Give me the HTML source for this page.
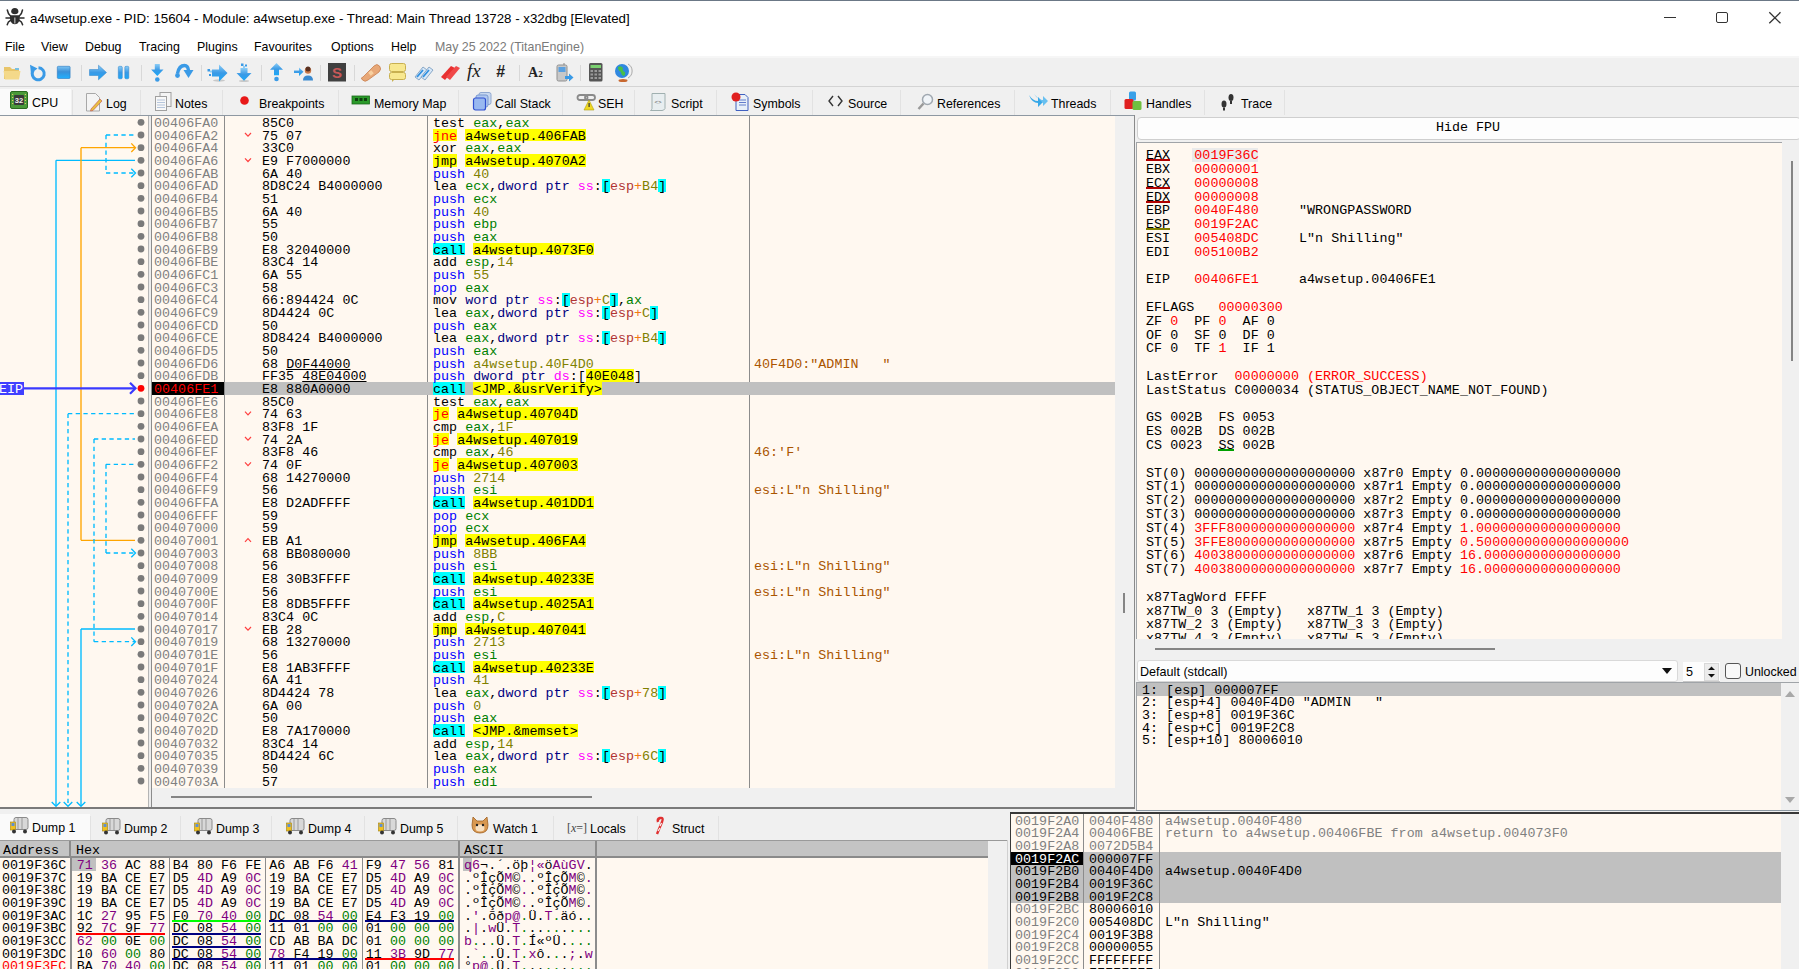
<!DOCTYPE html><html><head><meta charset="utf-8"><style>html,body{margin:0;padding:0;}body{width:1799px;height:969px;overflow:hidden;position:relative;background:#f0f0f0;font-family:"Liberation Sans",sans-serif;}.m{font-family:"Liberation Mono",monospace;font-size:13.3333px;line-height:13px;position:absolute;white-space:pre;letter-spacing:0.04px;}.s{font-family:"Liberation Sans",sans-serif;position:absolute;white-space:pre;}svg{position:absolute;overflow:visible}</style></head><body><div style="position:absolute;left:0px;top:0px;width:1799px;height:57px;background:#ffffff"></div><div style="position:absolute;left:0px;top:56px;width:1799px;height:2px;background:#f6f6f6"></div><div style="position:absolute;left:0px;top:0px;width:1799px;height:1px;background:#6b7886"></div><svg style="left:0px;top:0px" width="30" height="30" viewBox="0 0 30 30"><path d="M11.2 11.5 Q11.2 8 14.8 8 Q18.4 8 18.4 11.5 Q18.4 14.2 14.8 14.2 Q11.2 14.2 11.2 11.5z" fill="#2e2e2e"/><path d="M10 15.3 L19.8 15.3 Q20.3 21 17.5 23.5 Q14.8 25 12.2 23.5 Q9.4 21 10 15.3z" fill="#2e2e2e"/><path d="M10.5 16 Q8 14 7.3 10 M19.3 16 Q21.8 14 22.5 10 M6 18 H10 M20 18 H24 M10.5 20.5 Q8 21.5 7.2 24.8 M19.3 20.5 Q21.8 21.5 22.6 24.8" stroke="#2e2e2e" stroke-width="1.5" fill="none" stroke-linecap="round"/><path d="M14.8 17.5 V23.5" stroke="#a8a8a8" stroke-width="1.4"/></svg><div style="position:absolute;left:30px;top:11px;white-space:pre;font-family:'Liberation Sans', sans-serif;font-size:13.3px;line-height:16px;color:#000">a4wsetup.exe - PID: 15604 - Module: a4wsetup.exe - Thread: Main Thread 13728 - x32dbg [Elevated]</div><div style="position:absolute;left:1664px;top:17px;width:12px;height:1.4px;background:#333"></div><div style="position:absolute;left:1716px;top:11.5px;width:11.7px;height:11.3px;border:1.5px solid #333;border-radius:2px;box-sizing:border-box"></div><svg style="left:1769px;top:11.5px" width="12" height="12" viewBox="0 0 12 12"><path d="M0.3 0.3 L11.5 11.3 M11.5 0.3 L0.3 11.3" stroke="#333" stroke-width="1.3"/></svg><div style="position:absolute;left:5px;top:40px;white-space:pre;font-family:'Liberation Sans', sans-serif;font-size:12.4px;line-height:14px;color:#000">File</div><div style="position:absolute;left:41px;top:40px;white-space:pre;font-family:'Liberation Sans', sans-serif;font-size:12.4px;line-height:14px;color:#000">View</div><div style="position:absolute;left:85px;top:40px;white-space:pre;font-family:'Liberation Sans', sans-serif;font-size:12.4px;line-height:14px;color:#000">Debug</div><div style="position:absolute;left:139px;top:40px;white-space:pre;font-family:'Liberation Sans', sans-serif;font-size:12.4px;line-height:14px;color:#000">Tracing</div><div style="position:absolute;left:197px;top:40px;white-space:pre;font-family:'Liberation Sans', sans-serif;font-size:12.4px;line-height:14px;color:#000">Plugins</div><div style="position:absolute;left:254px;top:40px;white-space:pre;font-family:'Liberation Sans', sans-serif;font-size:12.4px;line-height:14px;color:#000">Favourites</div><div style="position:absolute;left:331px;top:40px;white-space:pre;font-family:'Liberation Sans', sans-serif;font-size:12.4px;line-height:14px;color:#000">Options</div><div style="position:absolute;left:391px;top:40px;white-space:pre;font-family:'Liberation Sans', sans-serif;font-size:12.4px;line-height:14px;color:#000">Help</div><div style="position:absolute;left:435px;top:40px;white-space:pre;font-family:'Liberation Sans', sans-serif;font-size:12.4px;line-height:14px;color:#7a7a7a">May 25 2022 (TitanEngine)</div><div style="position:absolute;left:0px;top:58px;width:1799px;height:28px;background:#f0f0f0"></div><div style="position:absolute;left:0px;top:86px;width:1799px;height:1px;background:#d4d4d4"></div><div style="position:absolute;left:81px;top:65px;width:1px;height:16px;background:#d8d8d8"></div><div style="position:absolute;left:141px;top:65px;width:1px;height:16px;background:#d8d8d8"></div><div style="position:absolute;left:201px;top:65px;width:1px;height:16px;background:#d8d8d8"></div><div style="position:absolute;left:261px;top:65px;width:1px;height:16px;background:#d8d8d8"></div><div style="position:absolute;left:320px;top:65px;width:1px;height:16px;background:#d8d8d8"></div><div style="position:absolute;left:354px;top:65px;width:1px;height:16px;background:#d8d8d8"></div><div style="position:absolute;left:519px;top:65px;width:1px;height:16px;background:#d8d8d8"></div><div style="position:absolute;left:580px;top:65px;width:1px;height:16px;background:#d8d8d8"></div><svg style="left:3px;top:65px" width="18" height="15" viewBox="0 0 18 15"><path d="M1 2 h6 l2 2 h7 v10 h-15z" fill="#e8c56a"/><path d="M0.5 6 h17 l-1.5 8.5 h-14z" fill="#f4d98a"/><path d="M12 3 h4 v2 h-4z" fill="#7ac0e0"/></svg><svg style="left:29px;top:64px" width="18" height="18" viewBox="0 0 18 18"><path d="M4.2 6.5 A6 6 0 1 0 9.5 3.8" stroke="#3a9ae6" stroke-width="3" fill="none"/><path d="M1 0.8 L8.5 4.5 L2 9.5z" fill="#3a9ae6"/><circle cx="10" cy="10.5" r="1.8" fill="#f0f0f0"/></svg><svg style="left:57px;top:65.5px" width="14" height="13"><defs><linearGradient id="gst" x1="0" y1="0" x2="0" y2="1"><stop offset="0" stop-color="#7cc4f4"/><stop offset="0.45" stop-color="#3a90d8"/><stop offset="1" stop-color="#20b0ff"/></linearGradient></defs><rect x="0.3" y="0.3" width="12.8" height="12.2" rx="1" fill="url(#gst)" stroke="#2a78c0" stroke-width="0.6"/></svg><svg style="left:0px;top:0px;width:0;height:0" width="0" height="0"><defs><linearGradient id="gb" x1="0" y1="0" x2="0" y2="1"><stop offset="0" stop-color="#8ccdf6"/><stop offset="0.5" stop-color="#3a9ae6"/><stop offset="1" stop-color="#1aa8f8"/></linearGradient></defs></svg><svg style="left:89px;top:65px" width="18" height="15" viewBox="0 0 18 15"><path d="M0.5 4.5 h9 v-4.3 l8 7.3 l-8 7.3 v-4.3 h-9z" fill="url(#gb)" stroke="#2a80c8" stroke-width="0.5"/></svg><svg style="left:118px;top:65.5px" width="12" height="14"><rect x="0.3" y="0.3" width="4" height="12.5" rx="1.2" fill="url(#gb)" stroke="#2a80c8" stroke-width="0.5"/><rect x="6.8" y="0.3" width="4" height="12.5" rx="1.2" fill="url(#gb)" stroke="#2a80c8" stroke-width="0.5"/></svg><svg style="left:151px;top:63.5px" width="13" height="19" viewBox="0 0 13 19"><path d="M3.8 0 h5 v5.5 h3.7 l-6.2 6.5 l-6.2 -6.5 h3.7z" fill="url(#gb)"/><circle cx="6.3" cy="15.5" r="2.3" fill="#3a9ae6"/></svg><svg style="left:174px;top:64px" width="20" height="16" viewBox="0 0 20 16"><path d="M3.5 9.5 Q5 1.5 10.5 1.5 Q14 1.5 14.5 6.5" stroke="#3a9ae6" stroke-width="3.4" fill="none"/><path d="M9.5 6 h10 l-5 8z" fill="#3a9ae6"/><circle cx="3.5" cy="11.5" r="2.4" fill="#3a9ae6"/></svg><svg style="left:207px;top:64px" width="21" height="18" viewBox="0 0 21 18"><ellipse cx="12" cy="16.5" rx="6" ry="1.2" fill="#c8c8c8"/><path d="M5 5.5 h7 v-5 l8.5 8.5 l-8.5 8.5 v-5 h-7z" fill="url(#gb)"/><rect x="0.5" y="5" width="2.5" height="2.5" fill="#3a9ae6"/><rect x="2" y="10" width="2" height="2" fill="#3a9ae6"/><rect x="3" y="6.5" width="2" height="2" fill="#8ccdf6"/></svg><svg style="left:236px;top:63px" width="16" height="19" viewBox="0 0 16 19"><ellipse cx="8" cy="18" rx="5" ry="1" fill="#c8c8c8"/><path d="M4.5 5 h7 v5 h4 l-7.5 7.8 l-7.5 -7.8 h4z" fill="url(#gb)"/><rect x="5" y="0.5" width="2.5" height="2.5" fill="#3a9ae6"/><rect x="9" y="1.5" width="2" height="2" fill="#3a9ae6"/><rect x="7" y="3" width="2" height="2" fill="#8ccdf6"/></svg><svg style="left:270px;top:63px" width="14" height="19" viewBox="0 0 14 19"><path d="M6.5 0 l6.5 6.8 h-4 v5.5 h-5 v-5.5 h-4z" fill="url(#gb)"/><circle cx="6.5" cy="16" r="2.3" fill="#3a9ae6"/></svg><svg style="left:294px;top:65px" width="20" height="16" viewBox="0 0 20 16"><path d="M0 5.5 h5 v-3 l4.5 4.3 l-4.5 4.3 v-3 h-5z" fill="url(#gb)"/><path d="M9 15.5 q0 -5 5 -5 q5 0 5 5z" fill="#3a8ad0"/><circle cx="14" cy="5.5" r="3.2" fill="#c87848"/><circle cx="14" cy="4" r="2.5" fill="#5a3020"/></svg><svg style="left:328px;top:63px" width="18" height="19"><rect x="0" y="0" width="18" height="18.5" fill="#404040"/><text x="9" y="14.5" font-family="Liberation Sans" font-size="15" font-weight="bold" fill="#c85858" text-anchor="middle">S</text></svg><svg style="left:361px;top:64px" width="20" height="18" viewBox="0 0 20 18"><path d="M2 13 L13 2 Q16 -1 18.5 2 Q21 5 18 8 L7 16 Q4 18.5 1.5 16 Q-1 13.5 2 13z" fill="#e8a878" stroke="#c88050" stroke-width="0.8"/><rect x="8" y="7" width="4" height="4" fill="#f8d0a0" transform="rotate(-40 10 9)"/></svg><svg style="left:389px;top:63px" width="17" height="19" viewBox="0 0 17 19"><rect x="0.5" y="0.5" width="16" height="8" rx="2" fill="#f8e890" stroke="#c8b050"/><rect x="0.5" y="9.5" width="16" height="7" rx="2" fill="#f8e890" stroke="#c8b050"/><path d="M3 16 l0 3 l3 -3z" fill="#c8b050"/></svg><svg style="left:414px;top:64px" width="20" height="18" viewBox="0 0 20 18"><path d="M1 13 L9 3 L13 6 L5 16z" fill="#d8e8f8" stroke="#88a8c8"/><path d="M7 13 L15 3 L19 6 L11 16z" fill="#d8e8f8" stroke="#88a8c8"/><path d="M3 13 L9 6 M9 13 L15 6" stroke="#3090e0" stroke-width="1.8"/></svg><svg style="left:441px;top:64px" width="20" height="18" viewBox="0 0 20 18"><path d="M0 13 L10 2 L14 4 L4 16z" fill="#e83030"/><path d="M5 13 L15 2 L19 4 L9 16z" fill="#f04848"/></svg><div class="s" style="left:467px;top:61px;font-family:'Liberation Serif',serif;font-style:italic;font-size:19px;line-height:20px;color:#222">fx</div><div class="s" style="left:496px;top:63px;font-family:'Liberation Sans',sans-serif;font-weight:bold;font-style:italic;font-size:16px;line-height:18px;color:#222">#</div><div class="s" style="left:528px;top:65px;font-family:'Liberation Serif',serif;font-weight:bold;font-size:14px;line-height:16px;color:#222">A<span style="font-size:9px">2</span></div><svg style="left:556px;top:63px" width="18" height="19" viewBox="0 0 18 19"><rect x="1" y="2" width="10" height="16" rx="1.5" fill="#c8c8c8" stroke="#909090"/><rect x="2.5" y="4" width="7" height="5" fill="#5aa0e0"/><path d="M8 2 V0" stroke="#888"/><path d="M9 13 h4 v-2.5 l4.5 4 l-4.5 4 v-2.5 h-4z" fill="#3a9ae6"/></svg><svg style="left:589px;top:63px" width="14" height="19" viewBox="0 0 14 19"><rect x="0" y="0" width="13.5" height="18.5" rx="1.5" fill="#555"/><rect x="1.5" y="2" width="10.5" height="3" fill="#7ad070"/><g fill="#9a9a9a"><rect x="1.5" y="7" width="2.5" height="2"/><rect x="5.5" y="7" width="2.5" height="2"/><rect x="9.5" y="7" width="2.5" height="2"/><rect x="1.5" y="10.5" width="2.5" height="2"/><rect x="5.5" y="10.5" width="2.5" height="2"/><rect x="9.5" y="10.5" width="2.5" height="2"/><rect x="1.5" y="14" width="2.5" height="2"/><rect x="5.5" y="14" width="2.5" height="2"/><rect x="9.5" y="14" width="2.5" height="2"/></g></svg><svg style="left:614px;top:63px" width="19" height="19" viewBox="0 0 19 19"><circle cx="8" cy="8" r="7" fill="#2f88e0"/><path d="M4 4 q3 -2 5 1 q-1 3 2 4 q1 2 -1 4 q-3 -1 -3 -4 q-3 -1 -3 -5z" fill="#48c048"/><path d="M14 1 a8 8 0 0 1 0 14" stroke="#aaa" fill="none"/><ellipse cx="9" cy="17.5" rx="4.5" ry="1.5" fill="#c86830"/></svg><div style="position:absolute;left:0px;top:87px;width:1799px;height:29px;background:#f0f0f0"></div><div style="position:absolute;left:0px;top:89px;width:71px;height:27px;background:#fafafa"></div><div style="position:absolute;left:32px;top:96px;white-space:pre;font-family:'Liberation Sans', sans-serif;font-size:12.4px;line-height:14px;color:#000">CPU</div><div style="position:absolute;left:72px;top:90px;width:67px;height:25px;background:#f0f0f0;border-left:1px solid #e2e2e2;box-sizing:border-box"></div><div style="position:absolute;left:106px;top:97px;white-space:pre;font-family:'Liberation Sans', sans-serif;font-size:12.4px;line-height:14px;color:#000">Log</div><div style="position:absolute;left:140px;top:90px;width:82px;height:25px;background:#f0f0f0;border-left:1px solid #e2e2e2;box-sizing:border-box"></div><div style="position:absolute;left:175px;top:97px;white-space:pre;font-family:'Liberation Sans', sans-serif;font-size:12.4px;line-height:14px;color:#000">Notes</div><div style="position:absolute;left:222px;top:90px;width:115px;height:25px;background:#f0f0f0;border-left:1px solid #e2e2e2;box-sizing:border-box"></div><div style="position:absolute;left:259px;top:97px;white-space:pre;font-family:'Liberation Sans', sans-serif;font-size:12.4px;line-height:14px;color:#000">Breakpoints</div><div style="position:absolute;left:338px;top:90px;width:120px;height:25px;background:#f0f0f0;border-left:1px solid #e2e2e2;box-sizing:border-box"></div><div style="position:absolute;left:374px;top:97px;white-space:pre;font-family:'Liberation Sans', sans-serif;font-size:12.4px;line-height:14px;color:#000">Memory Map</div><div style="position:absolute;left:458px;top:90px;width:104px;height:25px;background:#f0f0f0;border-left:1px solid #e2e2e2;box-sizing:border-box"></div><div style="position:absolute;left:495px;top:97px;white-space:pre;font-family:'Liberation Sans', sans-serif;font-size:12.4px;line-height:14px;color:#000">Call Stack</div><div style="position:absolute;left:562px;top:90px;width:72px;height:25px;background:#f0f0f0;border-left:1px solid #e2e2e2;box-sizing:border-box"></div><div style="position:absolute;left:598px;top:97px;white-space:pre;font-family:'Liberation Sans', sans-serif;font-size:12.4px;line-height:14px;color:#000">SEH</div><div style="position:absolute;left:634px;top:90px;width:82px;height:25px;background:#f0f0f0;border-left:1px solid #e2e2e2;box-sizing:border-box"></div><div style="position:absolute;left:671px;top:97px;white-space:pre;font-family:'Liberation Sans', sans-serif;font-size:12.4px;line-height:14px;color:#000">Script</div><div style="position:absolute;left:716px;top:90px;width:96px;height:25px;background:#f0f0f0;border-left:1px solid #e2e2e2;box-sizing:border-box"></div><div style="position:absolute;left:753px;top:97px;white-space:pre;font-family:'Liberation Sans', sans-serif;font-size:12.4px;line-height:14px;color:#000">Symbols</div><div style="position:absolute;left:812px;top:90px;width:88px;height:25px;background:#f0f0f0;border-left:1px solid #e2e2e2;box-sizing:border-box"></div><div style="position:absolute;left:848px;top:97px;white-space:pre;font-family:'Liberation Sans', sans-serif;font-size:12.4px;line-height:14px;color:#000">Source</div><div style="position:absolute;left:900px;top:90px;width:114px;height:25px;background:#f0f0f0;border-left:1px solid #e2e2e2;box-sizing:border-box"></div><div style="position:absolute;left:937px;top:97px;white-space:pre;font-family:'Liberation Sans', sans-serif;font-size:12.4px;line-height:14px;color:#000">References</div><div style="position:absolute;left:1014px;top:90px;width:96px;height:25px;background:#f0f0f0;border-left:1px solid #e2e2e2;box-sizing:border-box"></div><div style="position:absolute;left:1051px;top:97px;white-space:pre;font-family:'Liberation Sans', sans-serif;font-size:12.4px;line-height:14px;color:#000">Threads</div><div style="position:absolute;left:1110px;top:90px;width:94px;height:25px;background:#f0f0f0;border-left:1px solid #e2e2e2;box-sizing:border-box"></div><div style="position:absolute;left:1146px;top:97px;white-space:pre;font-family:'Liberation Sans', sans-serif;font-size:12.4px;line-height:14px;color:#000">Handles</div><div style="position:absolute;left:1204px;top:90px;width:80px;height:25px;background:#f0f0f0;border-left:1px solid #e2e2e2;box-sizing:border-box"></div><div style="position:absolute;left:1241px;top:97px;white-space:pre;font-family:'Liberation Sans', sans-serif;font-size:12.4px;line-height:14px;color:#000">Trace</div><div style="position:absolute;left:1284px;top:90px;width:1px;height:25px;background:#e2e2e2"></div><svg style="left:10px;top:91px" width="18" height="18" viewBox="0 0 18 18"><rect x="0.5" y="0.5" width="17" height="17" rx="1.5" fill="#4a9a3a" stroke="#2a6a20"/><g fill="#d8c860"><rect x="2" y="3" width="1.2" height="1"/><rect x="2" y="6" width="1.2" height="1"/><rect x="2" y="9" width="1.2" height="1"/><rect x="2" y="12" width="1.2" height="1"/><rect x="14.8" y="3" width="1.2" height="1"/><rect x="14.8" y="6" width="1.2" height="1"/><rect x="14.8" y="9" width="1.2" height="1"/><rect x="14.8" y="12" width="1.2" height="1"/></g><rect x="4" y="4" width="10" height="10" rx="1" fill="#3a3a3a"/><text x="9" y="12" font-family="Liberation Sans" font-size="7.5" font-weight="bold" fill="#f0f0f0" text-anchor="middle">32</text></svg><svg style="left:86px;top:93px" width="17" height="19" viewBox="0 0 17 19"><path d="M0.5 0.5 h9 l4 4 v13.5 h-13z" fill="#f4f4f4" stroke="#a8a8a8"/><path d="M5 16 L14 6 L16 8 L7 17.5 L4.5 18z" fill="#e8c040" stroke="#c05050" stroke-width="0.6"/></svg><svg style="left:155px;top:92px" width="17" height="19" viewBox="0 0 17 19"><rect x="5" y="0.5" width="11" height="14" fill="#f4f4f4" stroke="#a0a0a0"/><rect x="0.5" y="4.5" width="11" height="14" fill="#f8f8f8" stroke="#a0a0a0"/><path d="M2 8 h8 M2 10.5 h8 M2 13 h8 M2 15.5 h8" stroke="#9ab0d0" stroke-width="0.7"/></svg><svg style="left:240px;top:96px" width="10" height="10"><circle cx="4.5" cy="4.5" r="4.3" fill="#e81818"/></svg><svg style="left:352px;top:96px" width="18" height="10"><rect x="0" y="0" width="17.5" height="8" fill="#2a9a2a" stroke="#1a6a1a" stroke-width="0.8"/><rect x="3" y="2" width="3" height="3" fill="#104010"/><rect x="7.5" y="2" width="3" height="3" fill="#104010"/><rect x="12" y="2" width="3" height="3" fill="#104010"/></svg><svg style="left:473px;top:92px" width="19" height="19" viewBox="0 0 19 19"><rect x="6" y="0.5" width="12" height="12" rx="2" fill="#c8d8f0" stroke="#90a8d0"/><rect x="3" y="3" width="12" height="12" rx="2" fill="#b0c8f0" stroke="#7898d0"/><rect x="0.5" y="6" width="12" height="12" rx="2" fill="#98b8f0" stroke="#3050d0" stroke-width="1.2"/></svg><svg style="left:577px;top:94px" width="19" height="17" viewBox="0 0 19 17"><rect x="0.5" y="1" width="10" height="5" rx="2.5" fill="none" stroke="#8a8a8a" stroke-width="1.8"/><rect x="8" y="1" width="10" height="5" rx="2.5" fill="none" stroke="#8a8a8a" stroke-width="1.8"/><path d="M12 6 L17 16 H7z" fill="#f0d820" stroke="#b0a010" stroke-width="0.6"/><rect x="11.5" y="9" width="1.2" height="4" fill="#333"/></svg><svg style="left:650px;top:93px" width="16" height="18" viewBox="0 0 16 18"><path d="M2 0.5 h13 v15 q-1 2 -3 2 h-11.5 q1.5 -1 1.5 -2z" fill="#e8eef0" stroke="#a0b0b0"/><text x="8" y="11" font-family="Liberation Mono" font-size="6" fill="#555" text-anchor="middle">&lt;&gt;</text></svg><svg style="left:731px;top:92px" width="18" height="19" viewBox="0 0 18 19"><path d="M5 2.5 h9 l3 3 v13 h-12z" fill="#e8f0f8" stroke="#4060c0"/><path d="M8 8 h7 M8 10.5 h7 M8 13 h7" stroke="#4060c0" stroke-width="0.8"/><circle cx="5" cy="5" r="4.5" fill="#e02020"/></svg><svg style="left:828px;top:95px" width="15" height="12" viewBox="0 0 15 12"><path d="M5 1 L1 6 L5 11 M10 1 L14 6 L10 11" stroke="#333" stroke-width="1.4" fill="none"/></svg><svg style="left:917px;top:93px" width="17" height="18" viewBox="0 0 17 18"><circle cx="10.5" cy="6.5" r="5" fill="#f0f4f8" stroke="#a0a8b0" stroke-width="1.5"/><path d="M6.5 10.5 L1.5 16" stroke="#9a9a9a" stroke-width="2.5"/></svg><svg style="left:1029px;top:93px" width="19" height="17" viewBox="0 0 19 17"><path d="M0 2 q4 6 9 6 v-4 l5 5 l-5 5 v-4 q-6 0 -9 -8z" fill="#38a8e8"/><path d="M5 1 q4 6 9 6 v-4 l5 5 l-5 5 v-3" fill="#68c0f0"/></svg><svg style="left:1124px;top:91px" width="18" height="20" viewBox="0 0 18 20"><rect x="5" y="0.5" width="7" height="9" rx="1.5" fill="#38a0e8"/><rect x="0.5" y="8" width="9" height="10" rx="1.5" fill="#e02020"/><rect x="8.5" y="10" width="9" height="9" rx="1.5" fill="#70c040"/></svg><svg style="left:1220px;top:92px" width="15" height="19" viewBox="0 0 15 19"><ellipse cx="4" cy="12" rx="2.5" ry="3.5" fill="#333"/><ellipse cx="11" cy="5.5" rx="2.5" ry="3.5" fill="#333"/><rect x="3" y="15.5" width="2" height="3" fill="#333"/><rect x="10" y="9" width="2" height="3" fill="#333"/></svg><div style="position:absolute;left:0px;top:115px;width:1135px;height:1px;background:#8e98a2"></div><div style="position:absolute;left:0px;top:116px;width:148px;height:691.5px;background:#fff8f0"></div><div style="position:absolute;left:148px;top:116px;width:1px;height:691px;background:#b4b4b4"></div><div style="position:absolute;left:149px;top:116px;width:2px;height:691px;background:#ececec"></div><div style="position:absolute;left:151px;top:116px;width:1px;height:691px;background:#8c8c8c"></div><div style="position:absolute;left:152px;top:116px;width:963px;height:672px;background:#fff8f0"></div><div style="position:absolute;left:1115px;top:116px;width:19px;height:691px;background:#f0f0f0"></div><div style="position:absolute;left:152px;top:788px;width:963px;height:19px;background:#f0f0f0"></div><div style="position:absolute;left:171px;top:796px;width:421px;height:2px;background:#858585"></div><div style="position:absolute;left:1123px;top:593px;width:2px;height:20px;background:#858585"></div><div style="position:absolute;left:1134px;top:115px;width:1px;height:694px;background:#8a8a8a"></div><div style="position:absolute;left:0px;top:807px;width:1135px;height:2.5px;background:#7a7a7a"></div><div style="position:absolute;left:224px;top:116px;width:1px;height:672px;background:#8c8c8c"></div><div style="position:absolute;left:427px;top:116px;width:1px;height:672px;background:#8c8c8c"></div><div style="position:absolute;left:749px;top:116px;width:1px;height:672px;background:#8c8c8c"></div><div style="position:absolute;left:225px;top:382.007px;width:890px;height:12.667px;background:#c0c0c0"></div><div style="position:absolute;left:152px;top:382.007px;width:72px;height:12.667px;background:#000000"></div><div style="position:absolute;left:433.0px;top:128.67px;width:24.12px;height:12.667px;background:#ffff00"></div><div style="position:absolute;left:465.16px;top:128.67px;width:120.6px;height:12.667px;background:#ffff00"></div><div style="position:absolute;left:433.0px;top:154.0px;width:24.12px;height:12.667px;background:#ffff00"></div><div style="position:absolute;left:465.16px;top:154.0px;width:120.6px;height:12.667px;background:#ffff00"></div><div style="position:absolute;left:601.84px;top:179.34px;width:8.04px;height:12.667px;background:#00ffff"></div><div style="position:absolute;left:658.12px;top:179.34px;width:8.04px;height:12.667px;background:#00ffff"></div><div style="position:absolute;left:433.0px;top:242.67px;width:32.16px;height:12.667px;background:#00ffff"></div><div style="position:absolute;left:473.2px;top:242.67px;width:120.6px;height:12.667px;background:#ffff00"></div><div style="position:absolute;left:561.64px;top:293.34px;width:8.04px;height:12.667px;background:#00ffff"></div><div style="position:absolute;left:609.88px;top:293.34px;width:8.04px;height:12.667px;background:#00ffff"></div><div style="position:absolute;left:601.84px;top:306.0px;width:8.04px;height:12.667px;background:#00ffff"></div><div style="position:absolute;left:650.08px;top:306.0px;width:8.04px;height:12.667px;background:#00ffff"></div><div style="position:absolute;left:601.84px;top:331.34px;width:8.04px;height:12.667px;background:#00ffff"></div><div style="position:absolute;left:658.12px;top:331.34px;width:8.04px;height:12.667px;background:#00ffff"></div><div style="position:absolute;left:585.76px;top:369.34px;width:48.24px;height:12.667px;background:#ffff00"></div><div style="position:absolute;left:433.0px;top:382.01px;width:32.16px;height:12.667px;background:#00ffff"></div><div style="position:absolute;left:473.2px;top:382.01px;width:128.64px;height:12.667px;background:#ffff00"></div><div style="position:absolute;left:433.0px;top:407.34px;width:16.08px;height:12.667px;background:#ffff00"></div><div style="position:absolute;left:457.12px;top:407.34px;width:120.6px;height:12.667px;background:#ffff00"></div><div style="position:absolute;left:433.0px;top:432.68px;width:16.08px;height:12.667px;background:#ffff00"></div><div style="position:absolute;left:457.12px;top:432.68px;width:120.6px;height:12.667px;background:#ffff00"></div><div style="position:absolute;left:433.0px;top:458.01px;width:16.08px;height:12.667px;background:#ffff00"></div><div style="position:absolute;left:457.12px;top:458.01px;width:120.6px;height:12.667px;background:#ffff00"></div><div style="position:absolute;left:433.0px;top:496.01px;width:32.16px;height:12.667px;background:#00ffff"></div><div style="position:absolute;left:473.2px;top:496.01px;width:120.6px;height:12.667px;background:#ffff00"></div><div style="position:absolute;left:433.0px;top:534.01px;width:24.12px;height:12.667px;background:#ffff00"></div><div style="position:absolute;left:465.16px;top:534.01px;width:120.6px;height:12.667px;background:#ffff00"></div><div style="position:absolute;left:433.0px;top:572.01px;width:32.16px;height:12.667px;background:#00ffff"></div><div style="position:absolute;left:473.2px;top:572.01px;width:120.6px;height:12.667px;background:#ffff00"></div><div style="position:absolute;left:433.0px;top:597.35px;width:32.16px;height:12.667px;background:#00ffff"></div><div style="position:absolute;left:473.2px;top:597.35px;width:120.6px;height:12.667px;background:#ffff00"></div><div style="position:absolute;left:433.0px;top:622.68px;width:24.12px;height:12.667px;background:#ffff00"></div><div style="position:absolute;left:465.16px;top:622.68px;width:120.6px;height:12.667px;background:#ffff00"></div><div style="position:absolute;left:433.0px;top:660.68px;width:32.16px;height:12.667px;background:#00ffff"></div><div style="position:absolute;left:473.2px;top:660.68px;width:120.6px;height:12.667px;background:#ffff00"></div><div style="position:absolute;left:601.84px;top:686.01px;width:8.04px;height:12.667px;background:#00ffff"></div><div style="position:absolute;left:658.12px;top:686.01px;width:8.04px;height:12.667px;background:#00ffff"></div><div style="position:absolute;left:433.0px;top:724.02px;width:32.16px;height:12.667px;background:#00ffff"></div><div style="position:absolute;left:473.2px;top:724.02px;width:104.52px;height:12.667px;background:#ffff00"></div><div style="position:absolute;left:601.84px;top:749.35px;width:8.04px;height:12.667px;background:#00ffff"></div><div style="position:absolute;left:658.12px;top:749.35px;width:8.04px;height:12.667px;background:#00ffff"></div><div class="m" style="left:154px;top:118.0px;line-height:12.667px;color:#808080">00406FA0</div><div class="m" style="left:262px;top:118.0px;line-height:12.667px;color:#000">85C0</div><div class="m" style="left:433px;top:118.0px;line-height:12.667px"><span style="color:#000000">test</span><span style="color:#000000"> </span><span style="color:#008000">eax</span><span style="color:#000000">,</span><span style="color:#008000">eax</span></div><div class="m" style="left:154px;top:130.67px;line-height:12.667px;color:#808080">00406FA2</div><div class="m" style="left:262px;top:130.67px;line-height:12.667px;color:#000">75 07</div><div class="m" style="left:433px;top:130.67px;line-height:12.667px"><span style="color:#ff0000">jne</span><span style="color:#000000"> </span><span style="color:#000000">a4wsetup.406FAB</span></div><div class="m" style="left:154px;top:143.33px;line-height:12.667px;color:#808080">00406FA4</div><div class="m" style="left:262px;top:143.33px;line-height:12.667px;color:#000">33C0</div><div class="m" style="left:433px;top:143.33px;line-height:12.667px"><span style="color:#000000">xor</span><span style="color:#000000"> </span><span style="color:#008000">eax</span><span style="color:#000000">,</span><span style="color:#008000">eax</span></div><div class="m" style="left:154px;top:156.0px;line-height:12.667px;color:#808080">00406FA6</div><div class="m" style="left:262px;top:156.0px;line-height:12.667px;color:#000">E9 F7000000</div><div class="m" style="left:433px;top:156.0px;line-height:12.667px"><span style="color:#000000">jmp</span><span style="color:#000000"> </span><span style="color:#000000">a4wsetup.4070A2</span></div><div class="m" style="left:154px;top:168.67px;line-height:12.667px;color:#808080">00406FAB</div><div class="m" style="left:262px;top:168.67px;line-height:12.667px;color:#000">6A 40</div><div class="m" style="left:433px;top:168.67px;line-height:12.667px"><span style="color:#0000ff">push</span><span style="color:#000000"> </span><span style="color:#808000">40</span></div><div class="m" style="left:154px;top:181.34px;line-height:12.667px;color:#808080">00406FAD</div><div class="m" style="left:262px;top:181.34px;line-height:12.667px;color:#000">8D8C24 B4000000</div><div class="m" style="left:433px;top:181.34px;line-height:12.667px"><span style="color:#000000">lea</span><span style="color:#000000"> </span><span style="color:#008000">ecx</span><span style="color:#000000">,</span><span style="color:#000080">dword</span><span style="color:#000000"> </span><span style="color:#000080">ptr</span><span style="color:#000000"> </span><span style="color:#ff00ff">ss</span><span style="color:#000000">:</span><span style="color:#000000">[</span><span style="color:#b03434">esp</span><span style="color:#f27711">+</span><span style="color:#808000">B4</span><span style="color:#000000">]</span></div><div class="m" style="left:154px;top:194.0px;line-height:12.667px;color:#808080">00406FB4</div><div class="m" style="left:262px;top:194.0px;line-height:12.667px;color:#000">51</div><div class="m" style="left:433px;top:194.0px;line-height:12.667px"><span style="color:#0000ff">push</span><span style="color:#000000"> </span><span style="color:#008000">ecx</span></div><div class="m" style="left:154px;top:206.67px;line-height:12.667px;color:#808080">00406FB5</div><div class="m" style="left:262px;top:206.67px;line-height:12.667px;color:#000">6A 40</div><div class="m" style="left:433px;top:206.67px;line-height:12.667px"><span style="color:#0000ff">push</span><span style="color:#000000"> </span><span style="color:#808000">40</span></div><div class="m" style="left:154px;top:219.34px;line-height:12.667px;color:#808080">00406FB7</div><div class="m" style="left:262px;top:219.34px;line-height:12.667px;color:#000">55</div><div class="m" style="left:433px;top:219.34px;line-height:12.667px"><span style="color:#0000ff">push</span><span style="color:#000000"> </span><span style="color:#008000">ebp</span></div><div class="m" style="left:154px;top:232.0px;line-height:12.667px;color:#808080">00406FB8</div><div class="m" style="left:262px;top:232.0px;line-height:12.667px;color:#000">50</div><div class="m" style="left:433px;top:232.0px;line-height:12.667px"><span style="color:#0000ff">push</span><span style="color:#000000"> </span><span style="color:#008000">eax</span></div><div class="m" style="left:154px;top:244.67px;line-height:12.667px;color:#808080">00406FB9</div><div class="m" style="left:262px;top:244.67px;line-height:12.667px;color:#000">E8 32040000</div><div class="m" style="left:433px;top:244.67px;line-height:12.667px"><span style="color:#000000">call</span><span style="color:#000000"> </span><span style="color:#000000">a4wsetup.4073F0</span></div><div class="m" style="left:154px;top:257.34px;line-height:12.667px;color:#808080">00406FBE</div><div class="m" style="left:262px;top:257.34px;line-height:12.667px;color:#000">83C4 14</div><div class="m" style="left:433px;top:257.34px;line-height:12.667px"><span style="color:#000000">add</span><span style="color:#000000"> </span><span style="color:#008000">esp</span><span style="color:#000000">,</span><span style="color:#808000">14</span></div><div class="m" style="left:154px;top:270.0px;line-height:12.667px;color:#808080">00406FC1</div><div class="m" style="left:262px;top:270.0px;line-height:12.667px;color:#000">6A 55</div><div class="m" style="left:433px;top:270.0px;line-height:12.667px"><span style="color:#0000ff">push</span><span style="color:#000000"> </span><span style="color:#808000">55</span></div><div class="m" style="left:154px;top:282.67px;line-height:12.667px;color:#808080">00406FC3</div><div class="m" style="left:262px;top:282.67px;line-height:12.667px;color:#000">58</div><div class="m" style="left:433px;top:282.67px;line-height:12.667px"><span style="color:#0000ff">pop</span><span style="color:#000000"> </span><span style="color:#008000">eax</span></div><div class="m" style="left:154px;top:295.34px;line-height:12.667px;color:#808080">00406FC4</div><div class="m" style="left:262px;top:295.34px;line-height:12.667px;color:#000">66:894424 0C</div><div class="m" style="left:433px;top:295.34px;line-height:12.667px"><span style="color:#000000">mov</span><span style="color:#000000"> </span><span style="color:#000080">word</span><span style="color:#000000"> </span><span style="color:#000080">ptr</span><span style="color:#000000"> </span><span style="color:#ff00ff">ss</span><span style="color:#000000">:</span><span style="color:#000000">[</span><span style="color:#b03434">esp</span><span style="color:#f27711">+</span><span style="color:#808000">C</span><span style="color:#000000">]</span><span style="color:#000000">,</span><span style="color:#008000">ax</span></div><div class="m" style="left:154px;top:308.0px;line-height:12.667px;color:#808080">00406FC9</div><div class="m" style="left:262px;top:308.0px;line-height:12.667px;color:#000">8D4424 0C</div><div class="m" style="left:433px;top:308.0px;line-height:12.667px"><span style="color:#000000">lea</span><span style="color:#000000"> </span><span style="color:#008000">eax</span><span style="color:#000000">,</span><span style="color:#000080">dword</span><span style="color:#000000"> </span><span style="color:#000080">ptr</span><span style="color:#000000"> </span><span style="color:#ff00ff">ss</span><span style="color:#000000">:</span><span style="color:#000000">[</span><span style="color:#b03434">esp</span><span style="color:#f27711">+</span><span style="color:#808000">C</span><span style="color:#000000">]</span></div><div class="m" style="left:154px;top:320.67px;line-height:12.667px;color:#808080">00406FCD</div><div class="m" style="left:262px;top:320.67px;line-height:12.667px;color:#000">50</div><div class="m" style="left:433px;top:320.67px;line-height:12.667px"><span style="color:#0000ff">push</span><span style="color:#000000"> </span><span style="color:#008000">eax</span></div><div class="m" style="left:154px;top:333.34px;line-height:12.667px;color:#808080">00406FCE</div><div class="m" style="left:262px;top:333.34px;line-height:12.667px;color:#000">8D8424 B4000000</div><div class="m" style="left:433px;top:333.34px;line-height:12.667px"><span style="color:#000000">lea</span><span style="color:#000000"> </span><span style="color:#008000">eax</span><span style="color:#000000">,</span><span style="color:#000080">dword</span><span style="color:#000000"> </span><span style="color:#000080">ptr</span><span style="color:#000000"> </span><span style="color:#ff00ff">ss</span><span style="color:#000000">:</span><span style="color:#000000">[</span><span style="color:#b03434">esp</span><span style="color:#f27711">+</span><span style="color:#808000">B4</span><span style="color:#000000">]</span></div><div class="m" style="left:154px;top:346.01px;line-height:12.667px;color:#808080">00406FD5</div><div class="m" style="left:262px;top:346.01px;line-height:12.667px;color:#000">50</div><div class="m" style="left:433px;top:346.01px;line-height:12.667px"><span style="color:#0000ff">push</span><span style="color:#000000"> </span><span style="color:#008000">eax</span></div><div class="m" style="left:154px;top:358.67px;line-height:12.667px;color:#808080">00406FD6</div><div class="m" style="left:262px;top:358.67px;line-height:12.667px;color:#000">68 <span style="text-decoration:underline">D0F44000</span></div><div class="m" style="left:433px;top:358.67px;line-height:12.667px"><span style="color:#0000ff">push</span><span style="color:#000000"> </span><span style="color:#808000">a4wsetup.40F4D0</span></div><div class="m" style="left:754px;top:358.67px;line-height:12.667px;color:#aa5500">40F4D0:"ADMIN   "</div><div class="m" style="left:154px;top:371.34px;line-height:12.667px;color:#808080">00406FDB</div><div class="m" style="left:262px;top:371.34px;line-height:12.667px;color:#000">FF35 <span style="text-decoration:underline">48E04000</span></div><div class="m" style="left:433px;top:371.34px;line-height:12.667px"><span style="color:#0000ff">push</span><span style="color:#000000"> </span><span style="color:#000080">dword</span><span style="color:#000000"> </span><span style="color:#000080">ptr</span><span style="color:#000000"> </span><span style="color:#ff00ff">ds</span><span style="color:#000000">:</span><span style="color:#000000">[</span><span style="color:#000000">40E048</span><span style="color:#000000">]</span></div><div class="m" style="left:154px;top:384.01px;line-height:12.667px;color:#ff0000">00406FE1</div><div class="m" style="left:262px;top:384.01px;line-height:12.667px;color:#000">E8 880A0000</div><div class="m" style="left:433px;top:384.01px;line-height:12.667px"><span style="color:#000000">call</span><span style="color:#000000"> </span><span style="color:#000000">&lt;JMP.&amp;usrVerify&gt;</span></div><div class="m" style="left:154px;top:396.67px;line-height:12.667px;color:#808080">00406FE6</div><div class="m" style="left:262px;top:396.67px;line-height:12.667px;color:#000">85C0</div><div class="m" style="left:433px;top:396.67px;line-height:12.667px"><span style="color:#000000">test</span><span style="color:#000000"> </span><span style="color:#008000">eax</span><span style="color:#000000">,</span><span style="color:#008000">eax</span></div><div class="m" style="left:154px;top:409.34px;line-height:12.667px;color:#808080">00406FE8</div><div class="m" style="left:262px;top:409.34px;line-height:12.667px;color:#000">74 63</div><div class="m" style="left:433px;top:409.34px;line-height:12.667px"><span style="color:#ff0000">je</span><span style="color:#000000"> </span><span style="color:#000000">a4wsetup.40704D</span></div><div class="m" style="left:154px;top:422.01px;line-height:12.667px;color:#808080">00406FEA</div><div class="m" style="left:262px;top:422.01px;line-height:12.667px;color:#000">83F8 1F</div><div class="m" style="left:433px;top:422.01px;line-height:12.667px"><span style="color:#000000">cmp</span><span style="color:#000000"> </span><span style="color:#008000">eax</span><span style="color:#000000">,</span><span style="color:#808000">1F</span></div><div class="m" style="left:154px;top:434.68px;line-height:12.667px;color:#808080">00406FED</div><div class="m" style="left:262px;top:434.68px;line-height:12.667px;color:#000">74 2A</div><div class="m" style="left:433px;top:434.68px;line-height:12.667px"><span style="color:#ff0000">je</span><span style="color:#000000"> </span><span style="color:#000000">a4wsetup.407019</span></div><div class="m" style="left:154px;top:447.34px;line-height:12.667px;color:#808080">00406FEF</div><div class="m" style="left:262px;top:447.34px;line-height:12.667px;color:#000">83F8 46</div><div class="m" style="left:433px;top:447.34px;line-height:12.667px"><span style="color:#000000">cmp</span><span style="color:#000000"> </span><span style="color:#008000">eax</span><span style="color:#000000">,</span><span style="color:#808000">46</span></div><div class="m" style="left:754px;top:447.34px;line-height:12.667px;color:#aa5500">46:'F'</div><div class="m" style="left:154px;top:460.01px;line-height:12.667px;color:#808080">00406FF2</div><div class="m" style="left:262px;top:460.01px;line-height:12.667px;color:#000">74 0F</div><div class="m" style="left:433px;top:460.01px;line-height:12.667px"><span style="color:#ff0000">je</span><span style="color:#000000"> </span><span style="color:#000000">a4wsetup.407003</span></div><div class="m" style="left:154px;top:472.68px;line-height:12.667px;color:#808080">00406FF4</div><div class="m" style="left:262px;top:472.68px;line-height:12.667px;color:#000">68 14270000</div><div class="m" style="left:433px;top:472.68px;line-height:12.667px"><span style="color:#0000ff">push</span><span style="color:#000000"> </span><span style="color:#808000">2714</span></div><div class="m" style="left:154px;top:485.34px;line-height:12.667px;color:#808080">00406FF9</div><div class="m" style="left:262px;top:485.34px;line-height:12.667px;color:#000">56</div><div class="m" style="left:433px;top:485.34px;line-height:12.667px"><span style="color:#0000ff">push</span><span style="color:#000000"> </span><span style="color:#008000">esi</span></div><div class="m" style="left:754px;top:485.34px;line-height:12.667px;color:#aa5500">esi:L"n Shilling"</div><div class="m" style="left:154px;top:498.01px;line-height:12.667px;color:#808080">00406FFA</div><div class="m" style="left:262px;top:498.01px;line-height:12.667px;color:#000">E8 D2ADFFFF</div><div class="m" style="left:433px;top:498.01px;line-height:12.667px"><span style="color:#000000">call</span><span style="color:#000000"> </span><span style="color:#000000">a4wsetup.401DD1</span></div><div class="m" style="left:154px;top:510.68px;line-height:12.667px;color:#808080">00406FFF</div><div class="m" style="left:262px;top:510.68px;line-height:12.667px;color:#000">59</div><div class="m" style="left:433px;top:510.68px;line-height:12.667px"><span style="color:#0000ff">pop</span><span style="color:#000000"> </span><span style="color:#008000">ecx</span></div><div class="m" style="left:154px;top:523.34px;line-height:12.667px;color:#808080">00407000</div><div class="m" style="left:262px;top:523.34px;line-height:12.667px;color:#000">59</div><div class="m" style="left:433px;top:523.34px;line-height:12.667px"><span style="color:#0000ff">pop</span><span style="color:#000000"> </span><span style="color:#008000">ecx</span></div><div class="m" style="left:154px;top:536.01px;line-height:12.667px;color:#808080">00407001</div><div class="m" style="left:262px;top:536.01px;line-height:12.667px;color:#000">EB A1</div><div class="m" style="left:433px;top:536.01px;line-height:12.667px"><span style="color:#000000">jmp</span><span style="color:#000000"> </span><span style="color:#000000">a4wsetup.406FA4</span></div><div class="m" style="left:154px;top:548.68px;line-height:12.667px;color:#808080">00407003</div><div class="m" style="left:262px;top:548.68px;line-height:12.667px;color:#000">68 BB080000</div><div class="m" style="left:433px;top:548.68px;line-height:12.667px"><span style="color:#0000ff">push</span><span style="color:#000000"> </span><span style="color:#808000">8BB</span></div><div class="m" style="left:154px;top:561.35px;line-height:12.667px;color:#808080">00407008</div><div class="m" style="left:262px;top:561.35px;line-height:12.667px;color:#000">56</div><div class="m" style="left:433px;top:561.35px;line-height:12.667px"><span style="color:#0000ff">push</span><span style="color:#000000"> </span><span style="color:#008000">esi</span></div><div class="m" style="left:754px;top:561.35px;line-height:12.667px;color:#aa5500">esi:L"n Shilling"</div><div class="m" style="left:154px;top:574.01px;line-height:12.667px;color:#808080">00407009</div><div class="m" style="left:262px;top:574.01px;line-height:12.667px;color:#000">E8 30B3FFFF</div><div class="m" style="left:433px;top:574.01px;line-height:12.667px"><span style="color:#000000">call</span><span style="color:#000000"> </span><span style="color:#000000">a4wsetup.40233E</span></div><div class="m" style="left:154px;top:586.68px;line-height:12.667px;color:#808080">0040700E</div><div class="m" style="left:262px;top:586.68px;line-height:12.667px;color:#000">56</div><div class="m" style="left:433px;top:586.68px;line-height:12.667px"><span style="color:#0000ff">push</span><span style="color:#000000"> </span><span style="color:#008000">esi</span></div><div class="m" style="left:754px;top:586.68px;line-height:12.667px;color:#aa5500">esi:L"n Shilling"</div><div class="m" style="left:154px;top:599.35px;line-height:12.667px;color:#808080">0040700F</div><div class="m" style="left:262px;top:599.35px;line-height:12.667px;color:#000">E8 8DB5FFFF</div><div class="m" style="left:433px;top:599.35px;line-height:12.667px"><span style="color:#000000">call</span><span style="color:#000000"> </span><span style="color:#000000">a4wsetup.4025A1</span></div><div class="m" style="left:154px;top:612.01px;line-height:12.667px;color:#808080">00407014</div><div class="m" style="left:262px;top:612.01px;line-height:12.667px;color:#000">83C4 0C</div><div class="m" style="left:433px;top:612.01px;line-height:12.667px"><span style="color:#000000">add</span><span style="color:#000000"> </span><span style="color:#008000">esp</span><span style="color:#000000">,</span><span style="color:#808000">C</span></div><div class="m" style="left:154px;top:624.68px;line-height:12.667px;color:#808080">00407017</div><div class="m" style="left:262px;top:624.68px;line-height:12.667px;color:#000">EB 28</div><div class="m" style="left:433px;top:624.68px;line-height:12.667px"><span style="color:#000000">jmp</span><span style="color:#000000"> </span><span style="color:#000000">a4wsetup.407041</span></div><div class="m" style="left:154px;top:637.35px;line-height:12.667px;color:#808080">00407019</div><div class="m" style="left:262px;top:637.35px;line-height:12.667px;color:#000">68 13270000</div><div class="m" style="left:433px;top:637.35px;line-height:12.667px"><span style="color:#0000ff">push</span><span style="color:#000000"> </span><span style="color:#808000">2713</span></div><div class="m" style="left:154px;top:650.01px;line-height:12.667px;color:#808080">0040701E</div><div class="m" style="left:262px;top:650.01px;line-height:12.667px;color:#000">56</div><div class="m" style="left:433px;top:650.01px;line-height:12.667px"><span style="color:#0000ff">push</span><span style="color:#000000"> </span><span style="color:#008000">esi</span></div><div class="m" style="left:754px;top:650.01px;line-height:12.667px;color:#aa5500">esi:L"n Shilling"</div><div class="m" style="left:154px;top:662.68px;line-height:12.667px;color:#808080">0040701F</div><div class="m" style="left:262px;top:662.68px;line-height:12.667px;color:#000">E8 1AB3FFFF</div><div class="m" style="left:433px;top:662.68px;line-height:12.667px"><span style="color:#000000">call</span><span style="color:#000000"> </span><span style="color:#000000">a4wsetup.40233E</span></div><div class="m" style="left:154px;top:675.35px;line-height:12.667px;color:#808080">00407024</div><div class="m" style="left:262px;top:675.35px;line-height:12.667px;color:#000">6A 41</div><div class="m" style="left:433px;top:675.35px;line-height:12.667px"><span style="color:#0000ff">push</span><span style="color:#000000"> </span><span style="color:#808000">41</span></div><div class="m" style="left:154px;top:688.01px;line-height:12.667px;color:#808080">00407026</div><div class="m" style="left:262px;top:688.01px;line-height:12.667px;color:#000">8D4424 78</div><div class="m" style="left:433px;top:688.01px;line-height:12.667px"><span style="color:#000000">lea</span><span style="color:#000000"> </span><span style="color:#008000">eax</span><span style="color:#000000">,</span><span style="color:#000080">dword</span><span style="color:#000000"> </span><span style="color:#000080">ptr</span><span style="color:#000000"> </span><span style="color:#ff00ff">ss</span><span style="color:#000000">:</span><span style="color:#000000">[</span><span style="color:#b03434">esp</span><span style="color:#f27711">+</span><span style="color:#808000">78</span><span style="color:#000000">]</span></div><div class="m" style="left:154px;top:700.68px;line-height:12.667px;color:#808080">0040702A</div><div class="m" style="left:262px;top:700.68px;line-height:12.667px;color:#000">6A 00</div><div class="m" style="left:433px;top:700.68px;line-height:12.667px"><span style="color:#0000ff">push</span><span style="color:#000000"> </span><span style="color:#808000">0</span></div><div class="m" style="left:154px;top:713.35px;line-height:12.667px;color:#808080">0040702C</div><div class="m" style="left:262px;top:713.35px;line-height:12.667px;color:#000">50</div><div class="m" style="left:433px;top:713.35px;line-height:12.667px"><span style="color:#0000ff">push</span><span style="color:#000000"> </span><span style="color:#008000">eax</span></div><div class="m" style="left:154px;top:726.02px;line-height:12.667px;color:#808080">0040702D</div><div class="m" style="left:262px;top:726.02px;line-height:12.667px;color:#000">E8 7A170000</div><div class="m" style="left:433px;top:726.02px;line-height:12.667px"><span style="color:#000000">call</span><span style="color:#000000"> </span><span style="color:#000000">&lt;JMP.&amp;memset&gt;</span></div><div class="m" style="left:154px;top:738.68px;line-height:12.667px;color:#808080">00407032</div><div class="m" style="left:262px;top:738.68px;line-height:12.667px;color:#000">83C4 14</div><div class="m" style="left:433px;top:738.68px;line-height:12.667px"><span style="color:#000000">add</span><span style="color:#000000"> </span><span style="color:#008000">esp</span><span style="color:#000000">,</span><span style="color:#808000">14</span></div><div class="m" style="left:154px;top:751.35px;line-height:12.667px;color:#808080">00407035</div><div class="m" style="left:262px;top:751.35px;line-height:12.667px;color:#000">8D4424 6C</div><div class="m" style="left:433px;top:751.35px;line-height:12.667px"><span style="color:#000000">lea</span><span style="color:#000000"> </span><span style="color:#008000">eax</span><span style="color:#000000">,</span><span style="color:#000080">dword</span><span style="color:#000000"> </span><span style="color:#000080">ptr</span><span style="color:#000000"> </span><span style="color:#ff00ff">ss</span><span style="color:#000000">:</span><span style="color:#000000">[</span><span style="color:#b03434">esp</span><span style="color:#f27711">+</span><span style="color:#808000">6C</span><span style="color:#000000">]</span></div><div class="m" style="left:154px;top:764.02px;line-height:12.667px;color:#808080">00407039</div><div class="m" style="left:262px;top:764.02px;line-height:12.667px;color:#000">50</div><div class="m" style="left:433px;top:764.02px;line-height:12.667px"><span style="color:#0000ff">push</span><span style="color:#000000"> </span><span style="color:#008000">eax</span></div><div class="m" style="left:154px;top:776.68px;line-height:12.667px;color:#808080">0040703A</div><div class="m" style="left:262px;top:776.68px;line-height:12.667px;color:#000">57</div><div class="m" style="left:433px;top:776.68px;line-height:12.667px"><span style="color:#0000ff">push</span><span style="color:#000000"> </span><span style="color:#008000">edi</span></div><svg style="left:0px;top:0px" width="1799" height="969"><circle cx="141" cy="122.33" r="3.4" fill="#7a7a7a"/><circle cx="141" cy="135.00" r="3.4" fill="#7a7a7a"/><path d="M245 133.00 L248 136.20 L251 133.00" stroke="#ff4040" stroke-width="1.2" fill="none"/><circle cx="141" cy="147.67" r="3.4" fill="#7a7a7a"/><circle cx="141" cy="160.33" r="3.4" fill="#7a7a7a"/><path d="M245 158.33 L248 161.53 L251 158.33" stroke="#ff4040" stroke-width="1.2" fill="none"/><circle cx="141" cy="173.00" r="3.4" fill="#7a7a7a"/><circle cx="141" cy="185.67" r="3.4" fill="#7a7a7a"/><circle cx="141" cy="198.34" r="3.4" fill="#7a7a7a"/><circle cx="141" cy="211.00" r="3.4" fill="#7a7a7a"/><circle cx="141" cy="223.67" r="3.4" fill="#7a7a7a"/><circle cx="141" cy="236.34" r="3.4" fill="#7a7a7a"/><circle cx="141" cy="249.00" r="3.4" fill="#7a7a7a"/><circle cx="141" cy="261.67" r="3.4" fill="#7a7a7a"/><circle cx="141" cy="274.34" r="3.4" fill="#7a7a7a"/><circle cx="141" cy="287.00" r="3.4" fill="#7a7a7a"/><circle cx="141" cy="299.67" r="3.4" fill="#7a7a7a"/><circle cx="141" cy="312.34" r="3.4" fill="#7a7a7a"/><circle cx="141" cy="325.01" r="3.4" fill="#7a7a7a"/><circle cx="141" cy="337.67" r="3.4" fill="#7a7a7a"/><circle cx="141" cy="350.34" r="3.4" fill="#7a7a7a"/><circle cx="141" cy="363.01" r="3.4" fill="#7a7a7a"/><circle cx="141" cy="375.67" r="3.4" fill="#7a7a7a"/><circle cx="141" cy="388.34" r="3.4" fill="#ff0000"/><circle cx="141" cy="401.01" r="3.4" fill="#7a7a7a"/><circle cx="141" cy="413.67" r="3.4" fill="#7a7a7a"/><path d="M245 411.67 L248 414.87 L251 411.67" stroke="#ff4040" stroke-width="1.2" fill="none"/><circle cx="141" cy="426.34" r="3.4" fill="#7a7a7a"/><circle cx="141" cy="439.01" r="3.4" fill="#7a7a7a"/><path d="M245 437.01 L248 440.21 L251 437.01" stroke="#ff4040" stroke-width="1.2" fill="none"/><circle cx="141" cy="451.68" r="3.4" fill="#7a7a7a"/><circle cx="141" cy="464.34" r="3.4" fill="#7a7a7a"/><path d="M245 462.34 L248 465.54 L251 462.34" stroke="#ff4040" stroke-width="1.2" fill="none"/><circle cx="141" cy="477.01" r="3.4" fill="#7a7a7a"/><circle cx="141" cy="489.68" r="3.4" fill="#7a7a7a"/><circle cx="141" cy="502.34" r="3.4" fill="#7a7a7a"/><circle cx="141" cy="515.01" r="3.4" fill="#7a7a7a"/><circle cx="141" cy="527.68" r="3.4" fill="#7a7a7a"/><circle cx="141" cy="540.34" r="3.4" fill="#7a7a7a"/><path d="M245 541.84 L248 538.64 L251 541.84" stroke="#ff4040" stroke-width="1.2" fill="none"/><circle cx="141" cy="553.01" r="3.4" fill="#7a7a7a"/><circle cx="141" cy="565.68" r="3.4" fill="#7a7a7a"/><circle cx="141" cy="578.35" r="3.4" fill="#7a7a7a"/><circle cx="141" cy="591.01" r="3.4" fill="#7a7a7a"/><circle cx="141" cy="603.68" r="3.4" fill="#7a7a7a"/><circle cx="141" cy="616.35" r="3.4" fill="#7a7a7a"/><circle cx="141" cy="629.01" r="3.4" fill="#7a7a7a"/><path d="M245 627.01 L248 630.21 L251 627.01" stroke="#ff4040" stroke-width="1.2" fill="none"/><circle cx="141" cy="641.68" r="3.4" fill="#7a7a7a"/><circle cx="141" cy="654.35" r="3.4" fill="#7a7a7a"/><circle cx="141" cy="667.01" r="3.4" fill="#7a7a7a"/><circle cx="141" cy="679.68" r="3.4" fill="#7a7a7a"/><circle cx="141" cy="692.35" r="3.4" fill="#7a7a7a"/><circle cx="141" cy="705.02" r="3.4" fill="#7a7a7a"/><circle cx="141" cy="717.68" r="3.4" fill="#7a7a7a"/><circle cx="141" cy="730.35" r="3.4" fill="#7a7a7a"/><circle cx="141" cy="743.02" r="3.4" fill="#7a7a7a"/><circle cx="141" cy="755.68" r="3.4" fill="#7a7a7a"/><circle cx="141" cy="768.35" r="3.4" fill="#7a7a7a"/><circle cx="141" cy="781.02" r="3.4" fill="#7a7a7a"/><path d="M106 135.00 L135 135.00" stroke="#00bbff" stroke-width="1.35" fill="none" stroke-dasharray="4.3 3.4"/><path d="M106 135.00 L106 173.00" stroke="#00bbff" stroke-width="1.35" fill="none" stroke-dasharray="4.3 3.4"/><path d="M106 173.00 L135 173.00" stroke="#00bbff" stroke-width="1.35" fill="none" stroke-dasharray="4.3 3.4"/><path d="M131.3 168.70 L135.5 173.00 L131.3 177.30" stroke="#00bbff" stroke-width="1.35" fill="none"/><path d="M56 160.33 L135 160.33" stroke="#00bbff" stroke-width="1.35" fill="none"/><path d="M56 160.33 L56 806.00" stroke="#00bbff" stroke-width="1.35" fill="none"/><path d="M51.7 802 L56 806.3 L60.3 802" stroke="#00bbff" stroke-width="1.3" fill="none"/><path d="M81 147.67 L135 147.67" stroke="#ffa500" stroke-width="1.35" fill="none"/><path d="M81 147.67 L81 540.34" stroke="#ffa500" stroke-width="1.35" fill="none"/><path d="M81 540.34 L135 540.34" stroke="#ffa500" stroke-width="1.35" fill="none"/><path d="M131.3 143.37 L135.5 147.67 L131.3 151.97" stroke="#ffa500" stroke-width="1.35" fill="none"/><path d="M68 413.67 L135 413.67" stroke="#00bbff" stroke-width="1.35" fill="none" stroke-dasharray="4.3 3.4"/><path d="M68 413.67 L68 806.00" stroke="#00bbff" stroke-width="1.35" fill="none" stroke-dasharray="4.3 3.4"/><path d="M63.7 802 L68 806.3 L72.3 802" stroke="#00bbff" stroke-width="1.3" fill="none"/><path d="M94 439.01 L135 439.01" stroke="#00bbff" stroke-width="1.35" fill="none" stroke-dasharray="4.3 3.4"/><path d="M94 439.01 L94 641.68" stroke="#00bbff" stroke-width="1.35" fill="none" stroke-dasharray="4.3 3.4"/><path d="M94 641.68 L135 641.68" stroke="#00bbff" stroke-width="1.35" fill="none" stroke-dasharray="4.3 3.4"/><path d="M131.3 637.38 L135.5 641.68 L131.3 645.98" stroke="#00bbff" stroke-width="1.35" fill="none"/><path d="M106 464.34 L135 464.34" stroke="#00bbff" stroke-width="1.35" fill="none" stroke-dasharray="4.3 3.4"/><path d="M106 464.34 L106 553.01" stroke="#00bbff" stroke-width="1.35" fill="none" stroke-dasharray="4.3 3.4"/><path d="M106 553.01 L135 553.01" stroke="#00bbff" stroke-width="1.35" fill="none" stroke-dasharray="4.3 3.4"/><path d="M131.3 548.71 L135.5 553.01 L131.3 557.31" stroke="#00bbff" stroke-width="1.35" fill="none"/><path d="M81 629.01 L135 629.01" stroke="#00bbff" stroke-width="1.35" fill="none"/><path d="M81 629.01 L81 806.00" stroke="#00bbff" stroke-width="1.35" fill="none"/><path d="M76.7 802 L81 806.3 L85.3 802" stroke="#00bbff" stroke-width="1.3" fill="none"/><path d="M24 388.34 L135 388.34" stroke="#3a3aff" stroke-width="2.4"/><path d="M130 382.84 L135.5 388.34 L130 393.84" stroke="#3a3aff" stroke-width="2.2" fill="none"/></svg><div style="position:absolute;left:0px;top:382.007px;width:24px;height:12.667px;background:#4040ff"></div><div class="m" style="left:-1px;top:384.007px;line-height:12.667px;color:#fff">EIP</div><div style="position:absolute;left:1135px;top:116px;width:664px;height:695px;background:#f0f0f0"></div><div style="position:absolute;left:1137px;top:117px;width:664px;height:23px;background:#fdfdfd;border:1px solid #cfcfcf;border-radius:4px;box-sizing:border-box"></div><div style="position:absolute;left:1436px;top:121px;white-space:pre;font-family:'Liberation Mono',monospace;font-size:13.3333px;line-height:14px;color:#000">Hide FPU</div><div style="position:absolute;left:1136px;top:142px;width:646px;height:1px;background:#a0a4a8"></div><div style="position:absolute;left:1136px;top:142px;width:1px;height:497px;background:#a0a4a8"></div><div style="position:absolute;left:1137px;top:143px;width:645px;height:496px;background:#fff8f0"></div><div style="position:absolute;left:1791px;top:161px;width:2px;height:200px;background:#858585"></div><div style="position:absolute;left:1155px;top:648px;width:340px;height:2px;background:#858585"></div><div style="position:absolute;left:1192px;top:148px;width:66px;height:14px;background:#eaeaea"></div><div style="position:absolute;left:1137px;top:143px;width:645px;height:496px;overflow:hidden"><div class="m" style="left:9.00px;top:6.2px;line-height:13.8px;letter-spacing:0.05px;color:#000">EAX</div><div class="m" style="left:57.30px;top:6.2px;line-height:13.8px;letter-spacing:0.05px;color:#ff0000">0019F36C</div><div class="m" style="left:9.00px;top:20.0px;line-height:13.8px;letter-spacing:0.05px;color:#000">EBX</div><div class="m" style="left:57.30px;top:20.0px;line-height:13.8px;letter-spacing:0.05px;color:#ff0000">00000001</div><div class="m" style="left:9.00px;top:33.8px;line-height:13.8px;letter-spacing:0.05px;color:#000">ECX</div><div class="m" style="left:57.30px;top:33.8px;line-height:13.8px;letter-spacing:0.05px;color:#ff0000">00000008</div><div class="m" style="left:9.00px;top:47.6px;line-height:13.8px;letter-spacing:0.05px;color:#000">EDX</div><div class="m" style="left:57.30px;top:47.6px;line-height:13.8px;letter-spacing:0.05px;color:#ff0000">00000008</div><div class="m" style="left:9.00px;top:61.4px;line-height:13.8px;letter-spacing:0.05px;color:#000">EBP</div><div class="m" style="left:57.30px;top:61.4px;line-height:13.8px;letter-spacing:0.05px;color:#ff0000">0040F480</div><div class="m" style="left:161.95px;top:61.4px;line-height:13.8px;letter-spacing:0.05px;color:#000">"WRONGPASSWORD</div><div class="m" style="left:9.00px;top:75.2px;line-height:13.8px;letter-spacing:0.05px;color:#000">ESP</div><div class="m" style="left:57.30px;top:75.2px;line-height:13.8px;letter-spacing:0.05px;color:#ff0000">0019F2AC</div><div class="m" style="left:9.00px;top:89.0px;line-height:13.8px;letter-spacing:0.05px;color:#000">ESI</div><div class="m" style="left:57.30px;top:89.0px;line-height:13.8px;letter-spacing:0.05px;color:#ff0000">005408DC</div><div class="m" style="left:161.95px;top:89.0px;line-height:13.8px;letter-spacing:0.05px;color:#000">L"n Shilling"</div><div class="m" style="left:9.00px;top:102.8px;line-height:13.8px;letter-spacing:0.05px;color:#000">EDI</div><div class="m" style="left:57.30px;top:102.8px;line-height:13.8px;letter-spacing:0.05px;color:#ff0000">005100B2</div><div class="m" style="left:9.00px;top:130.4px;line-height:13.8px;letter-spacing:0.05px;color:#000">EIP</div><div class="m" style="left:57.30px;top:130.4px;line-height:13.8px;letter-spacing:0.05px;color:#ff0000">00406FE1</div><div class="m" style="left:161.95px;top:130.4px;line-height:13.8px;letter-spacing:0.05px;color:#000">a4wsetup.00406FE1</div><div class="m" style="left:9.00px;top:158.0px;line-height:13.8px;letter-spacing:0.05px;color:#000">EFLAGS</div><div class="m" style="left:81.45px;top:158.0px;line-height:13.8px;letter-spacing:0.05px;color:#ff0000">00000300</div><div class="m" style="left:9.00px;top:171.8px;line-height:13.8px;letter-spacing:0.05px;color:#000">ZF</div><div class="m" style="left:33.15px;top:171.8px;line-height:13.8px;letter-spacing:0.05px;color:#ff0000">0</div><div class="m" style="left:57.30px;top:171.8px;line-height:13.8px;letter-spacing:0.05px;color:#000">PF</div><div class="m" style="left:81.45px;top:171.8px;line-height:13.8px;letter-spacing:0.05px;color:#ff0000">0</div><div class="m" style="left:105.60px;top:171.8px;line-height:13.8px;letter-spacing:0.05px;color:#000">AF</div><div class="m" style="left:129.75px;top:171.8px;line-height:13.8px;letter-spacing:0.05px;color:#000">0</div><div class="m" style="left:9.00px;top:185.6px;line-height:13.8px;letter-spacing:0.05px;color:#000">OF</div><div class="m" style="left:33.15px;top:185.6px;line-height:13.8px;letter-spacing:0.05px;color:#000">0</div><div class="m" style="left:57.30px;top:185.6px;line-height:13.8px;letter-spacing:0.05px;color:#000">SF</div><div class="m" style="left:81.45px;top:185.6px;line-height:13.8px;letter-spacing:0.05px;color:#000">0</div><div class="m" style="left:105.60px;top:185.6px;line-height:13.8px;letter-spacing:0.05px;color:#000">DF</div><div class="m" style="left:129.75px;top:185.6px;line-height:13.8px;letter-spacing:0.05px;color:#000">0</div><div class="m" style="left:9.00px;top:199.4px;line-height:13.8px;letter-spacing:0.05px;color:#000">CF</div><div class="m" style="left:33.15px;top:199.4px;line-height:13.8px;letter-spacing:0.05px;color:#000">0</div><div class="m" style="left:57.30px;top:199.4px;line-height:13.8px;letter-spacing:0.05px;color:#000">TF</div><div class="m" style="left:81.45px;top:199.4px;line-height:13.8px;letter-spacing:0.05px;color:#ff0000">1</div><div class="m" style="left:105.60px;top:199.4px;line-height:13.8px;letter-spacing:0.05px;color:#000">IF</div><div class="m" style="left:129.75px;top:199.4px;line-height:13.8px;letter-spacing:0.05px;color:#000">1</div><div class="m" style="left:9.00px;top:227.0px;line-height:13.8px;letter-spacing:0.05px;color:#000">LastError</div><div class="m" style="left:97.55px;top:227.0px;line-height:13.8px;letter-spacing:0.05px;color:#ff0000">00000000 (ERROR_SUCCESS)</div><div class="m" style="left:9.00px;top:240.8px;line-height:13.8px;letter-spacing:0.05px;color:#000">LastStatus</div><div class="m" style="left:97.55px;top:240.8px;line-height:13.8px;letter-spacing:0.05px;color:#000">C0000034 (STATUS_OBJECT_NAME_NOT_FOUND)</div><div class="m" style="left:9.00px;top:268.4px;line-height:13.8px;letter-spacing:0.05px;color:#000">GS</div><div class="m" style="left:33.15px;top:268.4px;line-height:13.8px;letter-spacing:0.05px;color:#000">002B</div><div class="m" style="left:81.45px;top:268.4px;line-height:13.8px;letter-spacing:0.05px;color:#000">FS</div><div class="m" style="left:105.60px;top:268.4px;line-height:13.8px;letter-spacing:0.05px;color:#000">0053</div><div class="m" style="left:9.00px;top:282.2px;line-height:13.8px;letter-spacing:0.05px;color:#000">ES</div><div class="m" style="left:33.15px;top:282.2px;line-height:13.8px;letter-spacing:0.05px;color:#000">002B</div><div class="m" style="left:81.45px;top:282.2px;line-height:13.8px;letter-spacing:0.05px;color:#000">DS</div><div class="m" style="left:105.60px;top:282.2px;line-height:13.8px;letter-spacing:0.05px;color:#000">002B</div><div class="m" style="left:9.00px;top:296.0px;line-height:13.8px;letter-spacing:0.05px;color:#000">CS</div><div class="m" style="left:33.15px;top:296.0px;line-height:13.8px;letter-spacing:0.05px;color:#000">0023</div><div class="m" style="left:81.45px;top:296.0px;line-height:13.8px;letter-spacing:0.05px;color:#000">SS</div><div class="m" style="left:105.60px;top:296.0px;line-height:13.8px;letter-spacing:0.05px;color:#000">002B</div><div class="m" style="left:9.00px;top:323.6px;line-height:13.8px;letter-spacing:0.05px;color:#000">ST(0)</div><div class="m" style="left:57.30px;top:323.6px;line-height:13.8px;letter-spacing:0.05px;color:#000">00000000000000000000</div><div class="m" style="left:226.35px;top:323.6px;line-height:13.8px;letter-spacing:0.05px;color:#000">x87r0</div><div class="m" style="left:274.65px;top:323.6px;line-height:13.8px;letter-spacing:0.05px;color:#000">Empty</div><div class="m" style="left:322.95px;top:323.6px;line-height:13.8px;letter-spacing:0.05px;color:#000">0.000000000000000000</div><div class="m" style="left:9.00px;top:337.4px;line-height:13.8px;letter-spacing:0.05px;color:#000">ST(1)</div><div class="m" style="left:57.30px;top:337.4px;line-height:13.8px;letter-spacing:0.05px;color:#000">00000000000000000000</div><div class="m" style="left:226.35px;top:337.4px;line-height:13.8px;letter-spacing:0.05px;color:#000">x87r1</div><div class="m" style="left:274.65px;top:337.4px;line-height:13.8px;letter-spacing:0.05px;color:#000">Empty</div><div class="m" style="left:322.95px;top:337.4px;line-height:13.8px;letter-spacing:0.05px;color:#000">0.000000000000000000</div><div class="m" style="left:9.00px;top:351.2px;line-height:13.8px;letter-spacing:0.05px;color:#000">ST(2)</div><div class="m" style="left:57.30px;top:351.2px;line-height:13.8px;letter-spacing:0.05px;color:#000">00000000000000000000</div><div class="m" style="left:226.35px;top:351.2px;line-height:13.8px;letter-spacing:0.05px;color:#000">x87r2</div><div class="m" style="left:274.65px;top:351.2px;line-height:13.8px;letter-spacing:0.05px;color:#000">Empty</div><div class="m" style="left:322.95px;top:351.2px;line-height:13.8px;letter-spacing:0.05px;color:#000">0.000000000000000000</div><div class="m" style="left:9.00px;top:365.0px;line-height:13.8px;letter-spacing:0.05px;color:#000">ST(3)</div><div class="m" style="left:57.30px;top:365.0px;line-height:13.8px;letter-spacing:0.05px;color:#000">00000000000000000000</div><div class="m" style="left:226.35px;top:365.0px;line-height:13.8px;letter-spacing:0.05px;color:#000">x87r3</div><div class="m" style="left:274.65px;top:365.0px;line-height:13.8px;letter-spacing:0.05px;color:#000">Empty</div><div class="m" style="left:322.95px;top:365.0px;line-height:13.8px;letter-spacing:0.05px;color:#000">0.000000000000000000</div><div class="m" style="left:9.00px;top:378.8px;line-height:13.8px;letter-spacing:0.05px;color:#000">ST(4)</div><div class="m" style="left:57.30px;top:378.8px;line-height:13.8px;letter-spacing:0.05px;color:#ff0000">3FFF8000000000000000</div><div class="m" style="left:226.35px;top:378.8px;line-height:13.8px;letter-spacing:0.05px;color:#000">x87r4</div><div class="m" style="left:274.65px;top:378.8px;line-height:13.8px;letter-spacing:0.05px;color:#000">Empty</div><div class="m" style="left:322.95px;top:378.8px;line-height:13.8px;letter-spacing:0.05px;color:#ff0000">1.000000000000000000</div><div class="m" style="left:9.00px;top:392.6px;line-height:13.8px;letter-spacing:0.05px;color:#000">ST(5)</div><div class="m" style="left:57.30px;top:392.6px;line-height:13.8px;letter-spacing:0.05px;color:#ff0000">3FFE8000000000000000</div><div class="m" style="left:226.35px;top:392.6px;line-height:13.8px;letter-spacing:0.05px;color:#000">x87r5</div><div class="m" style="left:274.65px;top:392.6px;line-height:13.8px;letter-spacing:0.05px;color:#000">Empty</div><div class="m" style="left:322.95px;top:392.6px;line-height:13.8px;letter-spacing:0.05px;color:#ff0000">0.5000000000000000000</div><div class="m" style="left:9.00px;top:406.4px;line-height:13.8px;letter-spacing:0.05px;color:#000">ST(6)</div><div class="m" style="left:57.30px;top:406.4px;line-height:13.8px;letter-spacing:0.05px;color:#ff0000">40038000000000000000</div><div class="m" style="left:226.35px;top:406.4px;line-height:13.8px;letter-spacing:0.05px;color:#000">x87r6</div><div class="m" style="left:274.65px;top:406.4px;line-height:13.8px;letter-spacing:0.05px;color:#000">Empty</div><div class="m" style="left:322.95px;top:406.4px;line-height:13.8px;letter-spacing:0.05px;color:#ff0000">16.00000000000000000</div><div class="m" style="left:9.00px;top:420.2px;line-height:13.8px;letter-spacing:0.05px;color:#000">ST(7)</div><div class="m" style="left:57.30px;top:420.2px;line-height:13.8px;letter-spacing:0.05px;color:#ff0000">40038000000000000000</div><div class="m" style="left:226.35px;top:420.2px;line-height:13.8px;letter-spacing:0.05px;color:#000">x87r7</div><div class="m" style="left:274.65px;top:420.2px;line-height:13.8px;letter-spacing:0.05px;color:#000">Empty</div><div class="m" style="left:322.95px;top:420.2px;line-height:13.8px;letter-spacing:0.05px;color:#ff0000">16.00000000000000000</div><div class="m" style="left:9.00px;top:447.8px;line-height:13.8px;letter-spacing:0.05px;color:#000">x87TagWord FFFF</div><div class="m" style="left:9.00px;top:461.6px;line-height:13.8px;letter-spacing:0.05px;color:#000">x87TW_0 3 (Empty)</div><div class="m" style="left:170.00px;top:461.6px;line-height:13.8px;letter-spacing:0.05px;color:#000">x87TW_1 3 (Empty)</div><div class="m" style="left:9.00px;top:475.4px;line-height:13.8px;letter-spacing:0.05px;color:#000">x87TW_2 3 (Empty)</div><div class="m" style="left:170.00px;top:475.4px;line-height:13.8px;letter-spacing:0.05px;color:#000">x87TW_3 3 (Empty)</div><div class="m" style="left:9.00px;top:489.2px;line-height:13.8px;letter-spacing:0.05px;color:#000">x87TW_4 3 (Empty)</div><div class="m" style="left:170.00px;top:489.2px;line-height:13.8px;letter-spacing:0.05px;color:#000">x87TW_5 3 (Empty)</div></div><div style="position:absolute;left:1146px;top:159.1px;width:24px;height:2px;background:#b00000"></div><div style="position:absolute;left:1146px;top:186.7px;width:24px;height:2px;background:#b00000"></div><div style="position:absolute;left:1146px;top:200.5px;width:24px;height:2px;background:#b00000"></div><div style="position:absolute;left:1146px;top:228.1px;width:24px;height:2px;background:#808000"></div><div style="position:absolute;left:1218px;top:448.9px;width:16px;height:2px;background:#00a000"></div><div style="position:absolute;left:1137px;top:660px;width:541px;height:22px;background:#fdfdfd;border:1px solid #d9d9d9;border-radius:3px;box-sizing:border-box"></div><div style="position:absolute;left:1140px;top:665px;white-space:pre;font-family:'Liberation Sans',sans-serif;font-size:12.6px;line-height:14px;color:#000">Default (stdcall)</div><svg style="left:1662px;top:668px" width="11" height="7"><path d="M0 0 L10 0 L5 6z" fill="#111"/></svg><div style="position:absolute;left:1683px;top:662px;width:37px;height:20px;background:#fdfdfd;border-bottom:1px solid #c8c8c8;box-sizing:border-box"></div><div style="position:absolute;left:1686px;top:665px;white-space:pre;font-family:'Liberation Sans',sans-serif;font-size:12.6px;line-height:14px;color:#000">5</div><div style="position:absolute;left:1704px;top:663px;width:15px;height:18px;background:#ececec;border:1px solid #d8d8d8;box-sizing:border-box"></div><svg style="left:1707px;top:665px" width="9" height="14"><path d="M1 5 L4.5 1.5 L8 5z M1 9 L4.5 12.5 L8 9z" fill="#111"/></svg><div style="position:absolute;left:1725px;top:663px;width:16px;height:16px;background:#f8f8f8;border:1.2px solid #555;border-radius:3px;box-sizing:border-box"></div><div style="position:absolute;left:1745px;top:665px;white-space:pre;font-family:'Liberation Sans',sans-serif;font-size:12.4px;line-height:14px;color:#000">Unlocked</div><div style="position:absolute;left:1136px;top:682px;width:663px;height:1px;background:#a0a4a8"></div><div style="position:absolute;left:1136px;top:682px;width:1px;height:129px;background:#a0a4a8"></div><div style="position:absolute;left:1137px;top:683px;width:644px;height:128px;background:#fff8f0"></div><div style="position:absolute;left:1137px;top:683px;width:644px;height:13px;background:#c0c0c0"></div><svg style="left:1784px;top:689px" width="12" height="10"><path d="M1 8 L6 2 L11 8z" fill="#a8a8a8"/></svg><svg style="left:1784px;top:795px" width="12" height="10"><path d="M1 2 L6 8 L11 2z" fill="#a8a8a8"/></svg><div class="m" style="left:1142px;top:684.6px;line-height:12.7px;color:#000">1: [esp] 000007FF</div><div class="m" style="left:1142px;top:697.3px;line-height:12.7px;color:#000">2: [esp+4] 0040F4D0 "ADMIN   "</div><div class="m" style="left:1142px;top:710.0px;line-height:12.7px;color:#000">3: [esp+8] 0019F36C</div><div class="m" style="left:1142px;top:722.7px;line-height:12.7px;color:#000">4: [esp+C] 0019F2C8</div><div class="m" style="left:1142px;top:735.4px;line-height:12.7px;color:#000">5: [esp+10] 80006010</div><div style="position:absolute;left:1136px;top:810px;width:663px;height:1px;background:#8c98a2"></div><div style="position:absolute;left:0px;top:809px;width:1135px;height:160px;background:#f0f0f0"></div><div style="position:absolute;left:1010px;top:812px;width:789px;height:157px;background:#f0f0f0"></div><div style="position:absolute;left:0px;top:813.5px;width:90px;height:27px;background:#fafafa"></div><div style="position:absolute;left:32px;top:821px;white-space:pre;font-family:'Liberation Sans', sans-serif;font-size:12.4px;line-height:14px;color:#000">Dump 1</div><div style="position:absolute;left:90px;top:815.5px;width:90px;height:25px;background:#f0f0f0;border-left:1px solid #e2e2e2;box-sizing:border-box"></div><div style="position:absolute;left:124px;top:822px;white-space:pre;font-family:'Liberation Sans', sans-serif;font-size:12.4px;line-height:14px;color:#000">Dump 2</div><div style="position:absolute;left:180px;top:815.5px;width:91px;height:25px;background:#f0f0f0;border-left:1px solid #e2e2e2;box-sizing:border-box"></div><div style="position:absolute;left:216px;top:822px;white-space:pre;font-family:'Liberation Sans', sans-serif;font-size:12.4px;line-height:14px;color:#000">Dump 3</div><div style="position:absolute;left:271px;top:815.5px;width:93px;height:25px;background:#f0f0f0;border-left:1px solid #e2e2e2;box-sizing:border-box"></div><div style="position:absolute;left:308px;top:822px;white-space:pre;font-family:'Liberation Sans', sans-serif;font-size:12.4px;line-height:14px;color:#000">Dump 4</div><div style="position:absolute;left:364px;top:815.5px;width:93px;height:25px;background:#f0f0f0;border-left:1px solid #e2e2e2;box-sizing:border-box"></div><div style="position:absolute;left:400px;top:822px;white-space:pre;font-family:'Liberation Sans', sans-serif;font-size:12.4px;line-height:14px;color:#000">Dump 5</div><div style="position:absolute;left:457px;top:815.5px;width:96px;height:25px;background:#f0f0f0;border-left:1px solid #e2e2e2;box-sizing:border-box"></div><div style="position:absolute;left:493px;top:822px;white-space:pre;font-family:'Liberation Sans', sans-serif;font-size:12.4px;line-height:14px;color:#000">Watch 1</div><div style="position:absolute;left:553px;top:815.5px;width:84px;height:25px;background:#f0f0f0;border-left:1px solid #e2e2e2;box-sizing:border-box"></div><div style="position:absolute;left:590px;top:822px;white-space:pre;font-family:'Liberation Sans', sans-serif;font-size:12.4px;line-height:14px;color:#000">Locals</div><div style="position:absolute;left:637px;top:815.5px;width:81px;height:25px;background:#f0f0f0;border-left:1px solid #e2e2e2;box-sizing:border-box"></div><div style="position:absolute;left:672px;top:822px;white-space:pre;font-family:'Liberation Sans', sans-serif;font-size:12.4px;line-height:14px;color:#000">Struct</div><div style="position:absolute;left:718px;top:815.5px;width:1px;height:25px;background:#e2e2e2"></div><svg style="left:10px;top:817px" width="19" height="17" viewBox="0 0 19 17"><rect x="4" y="0.5" width="14" height="12" rx="2" fill="#d8d8d8" stroke="#8a8a8a"/><path d="M8 1 V12 M12 1 V12" stroke="#9a9a9a"/><rect x="0.5" y="5" width="5" height="8" fill="#f0c020" stroke="#a08010" stroke-width="0.6"/><rect x="1.5" y="6" width="3" height="3" fill="#6090d0"/><circle cx="4" cy="14.5" r="2" fill="#333"/><circle cx="15" cy="14.5" r="2" fill="#333"/></svg><svg style="left:102px;top:818px" width="19" height="17" viewBox="0 0 19 17"><rect x="4" y="0.5" width="14" height="12" rx="2" fill="#d8d8d8" stroke="#8a8a8a"/><path d="M8 1 V12 M12 1 V12" stroke="#9a9a9a"/><rect x="0.5" y="5" width="5" height="8" fill="#f0c020" stroke="#a08010" stroke-width="0.6"/><rect x="1.5" y="6" width="3" height="3" fill="#6090d0"/><circle cx="4" cy="14.5" r="2" fill="#333"/><circle cx="15" cy="14.5" r="2" fill="#333"/></svg><svg style="left:194px;top:818px" width="19" height="17" viewBox="0 0 19 17"><rect x="4" y="0.5" width="14" height="12" rx="2" fill="#d8d8d8" stroke="#8a8a8a"/><path d="M8 1 V12 M12 1 V12" stroke="#9a9a9a"/><rect x="0.5" y="5" width="5" height="8" fill="#f0c020" stroke="#a08010" stroke-width="0.6"/><rect x="1.5" y="6" width="3" height="3" fill="#6090d0"/><circle cx="4" cy="14.5" r="2" fill="#333"/><circle cx="15" cy="14.5" r="2" fill="#333"/></svg><svg style="left:286px;top:818px" width="19" height="17" viewBox="0 0 19 17"><rect x="4" y="0.5" width="14" height="12" rx="2" fill="#d8d8d8" stroke="#8a8a8a"/><path d="M8 1 V12 M12 1 V12" stroke="#9a9a9a"/><rect x="0.5" y="5" width="5" height="8" fill="#f0c020" stroke="#a08010" stroke-width="0.6"/><rect x="1.5" y="6" width="3" height="3" fill="#6090d0"/><circle cx="4" cy="14.5" r="2" fill="#333"/><circle cx="15" cy="14.5" r="2" fill="#333"/></svg><svg style="left:378px;top:818px" width="19" height="17" viewBox="0 0 19 17"><rect x="4" y="0.5" width="14" height="12" rx="2" fill="#d8d8d8" stroke="#8a8a8a"/><path d="M8 1 V12 M12 1 V12" stroke="#9a9a9a"/><rect x="0.5" y="5" width="5" height="8" fill="#f0c020" stroke="#a08010" stroke-width="0.6"/><rect x="1.5" y="6" width="3" height="3" fill="#6090d0"/><circle cx="4" cy="14.5" r="2" fill="#333"/><circle cx="15" cy="14.5" r="2" fill="#333"/></svg><svg style="left:471px;top:816px" width="18" height="18" viewBox="0 0 18 18"><path d="M2 1 L6 5 L12 5 L16 1 L17 9 Q17 17 9 17 Q1 17 1 9z" fill="#d89850" stroke="#a06020" stroke-width="0.8"/><ellipse cx="9" cy="12" rx="4.5" ry="3.5" fill="#f8e0c0"/><circle cx="6" cy="9" r="1.2" fill="#222"/><circle cx="12" cy="9" r="1.2" fill="#222"/></svg><div class="s" style="left:567px;top:821px;font-family:'Liberation Serif',serif;font-size:12px;line-height:14px;color:#444">[<i>x</i>=]</div><svg style="left:654px;top:816px" width="14" height="19" viewBox="0 0 14 19"><path d="M3 18 L8 6 Q10 1 6 2 Q3 3 4 6" stroke="#e03030" stroke-width="2.4" fill="none"/><path d="M4 15 L6 12 M6 10 L7.5 7" stroke="#f8f8f8" stroke-width="1.2"/></svg><div style="position:absolute;left:0px;top:840px;width:1008px;height:129px;background:#f0f0f0"></div><div style="position:absolute;left:0px;top:840px;width:1008px;height:1px;background:#9a9a9a"></div><div style="position:absolute;left:0px;top:841px;width:988px;height:17px;background:#c4c4c4"></div><div style="position:absolute;left:0px;top:856px;width:988px;height:2px;background:#8a8a8a"></div><div style="position:absolute;left:0px;top:858px;width:988px;height:111px;background:#fff8f0"></div><div style="position:absolute;left:69px;top:841px;width:2px;height:17px;background:#8c8c8c"></div><div style="position:absolute;left:458px;top:841px;width:2px;height:17px;background:#8c8c8c"></div><div style="position:absolute;left:595px;top:841px;width:2px;height:17px;background:#8c8c8c"></div><div style="position:absolute;left:1007px;top:840px;width:1px;height:129px;background:#d0d0d0"></div><div style="position:absolute;left:3px;top:844px;white-space:pre;font-family:'Liberation Mono',monospace;font-size:13.3333px;line-height:14px;color:#000">Address</div><div style="position:absolute;left:76px;top:844px;white-space:pre;font-family:'Liberation Mono',monospace;font-size:13.3333px;line-height:14px;color:#000">Hex</div><div style="position:absolute;left:464px;top:844px;white-space:pre;font-family:'Liberation Mono',monospace;font-size:13.3333px;line-height:14px;color:#000">ASCII</div><div style="position:absolute;left:70px;top:858px;width:2px;height:111px;background:#8c8c8c"></div><div style="position:absolute;left:168.5px;top:858px;width:1px;height:111px;background:#8c8c8c"></div><div style="position:absolute;left:265.3px;top:858px;width:1px;height:111px;background:#8c8c8c"></div><div style="position:absolute;left:361.5px;top:858px;width:1px;height:111px;background:#8c8c8c"></div><div style="position:absolute;left:458px;top:858px;width:2px;height:111px;background:#8c8c8c"></div><div style="position:absolute;left:595px;top:858px;width:2px;height:111px;background:#8c8c8c"></div><div style="position:absolute;left:72px;top:858.3px;width:23.5px;height:12.667px;background:#c0c0c0"></div><div style="position:absolute;left:463px;top:858.3px;width:9px;height:12.667px;background:#c0c0c0"></div><div class="m" style="left:2px;top:859.9px;line-height:12.667px;color:#000">0019F36C</div><div class="m" style="left:76.8px;top:859.9px;line-height:12.667px;color:#800080">71</div><div class="m" style="left:100.92px;top:859.9px;line-height:12.667px;color:#800080">36</div><div class="m" style="left:125.03999999999999px;top:859.9px;line-height:12.667px;color:#000000">AC</div><div class="m" style="left:149.16px;top:859.9px;line-height:12.667px;color:#000000">88</div><div class="m" style="left:172.8px;top:859.9px;line-height:12.667px;color:#000000">B4</div><div class="m" style="left:196.92000000000002px;top:859.9px;line-height:12.667px;color:#000000">80</div><div class="m" style="left:221.04000000000002px;top:859.9px;line-height:12.667px;color:#000000">F6</div><div class="m" style="left:245.16000000000003px;top:859.9px;line-height:12.667px;color:#000000">FE</div><div class="m" style="left:269.3px;top:859.9px;line-height:12.667px;color:#000000">A6</div><div class="m" style="left:293.42px;top:859.9px;line-height:12.667px;color:#000000">AB</div><div class="m" style="left:317.54px;top:859.9px;line-height:12.667px;color:#000000">F6</div><div class="m" style="left:341.66px;top:859.9px;line-height:12.667px;color:#800080">41</div><div class="m" style="left:365.8px;top:859.9px;line-height:12.667px;color:#000000">F9</div><div class="m" style="left:389.92px;top:859.9px;line-height:12.667px;color:#800080">47</div><div class="m" style="left:414.04px;top:859.9px;line-height:12.667px;color:#800080">56</div><div class="m" style="left:438.16px;top:859.9px;line-height:12.667px;color:#000000">81</div><div class="m" style="left:464px;top:859.9px;line-height:12.667px"><span style="color:#800080">q</span><span style="color:#800080">6</span><span style="color:#000000">¬</span><span style="color:#000000">.</span><span style="color:#000000">´</span><span style="color:#000000">.</span><span style="color:#000000">ö</span><span style="color:#000000">þ</span><span style="color:#800080">¦</span><span style="color:#800080">«</span><span style="color:#000000">ö</span><span style="color:#800080">A</span><span style="color:#800080">ù</span><span style="color:#800080">G</span><span style="color:#800080">V</span><span style="color:#000000">.</span></div><div class="m" style="left:2px;top:872.57px;line-height:12.667px;color:#000">0019F37C</div><div class="m" style="left:76.8px;top:872.57px;line-height:12.667px;color:#000000">19</div><div class="m" style="left:100.92px;top:872.57px;line-height:12.667px;color:#000000">BA</div><div class="m" style="left:125.03999999999999px;top:872.57px;line-height:12.667px;color:#000000">CE</div><div class="m" style="left:149.16px;top:872.57px;line-height:12.667px;color:#000000">E7</div><div class="m" style="left:172.8px;top:872.57px;line-height:12.667px;color:#000000">D5</div><div class="m" style="left:196.92000000000002px;top:872.57px;line-height:12.667px;color:#800080">4D</div><div class="m" style="left:221.04000000000002px;top:872.57px;line-height:12.667px;color:#000000">A9</div><div class="m" style="left:245.16000000000003px;top:872.57px;line-height:12.667px;color:#800080">0C</div><div class="m" style="left:269.3px;top:872.57px;line-height:12.667px;color:#000000">19</div><div class="m" style="left:293.42px;top:872.57px;line-height:12.667px;color:#000000">BA</div><div class="m" style="left:317.54px;top:872.57px;line-height:12.667px;color:#000000">CE</div><div class="m" style="left:341.66px;top:872.57px;line-height:12.667px;color:#000000">E7</div><div class="m" style="left:365.8px;top:872.57px;line-height:12.667px;color:#000000">D5</div><div class="m" style="left:389.92px;top:872.57px;line-height:12.667px;color:#800080">4D</div><div class="m" style="left:414.04px;top:872.57px;line-height:12.667px;color:#000000">A9</div><div class="m" style="left:438.16px;top:872.57px;line-height:12.667px;color:#800080">0C</div><div class="m" style="left:464px;top:872.57px;line-height:12.667px"><span style="color:#000000">.</span><span style="color:#000000">º</span><span style="color:#000000">Î</span><span style="color:#000000">ç</span><span style="color:#000000">Õ</span><span style="color:#800080">M</span><span style="color:#000000">©</span><span style="color:#800080">.</span><span style="color:#000000">.</span><span style="color:#000000">º</span><span style="color:#000000">Î</span><span style="color:#000000">ç</span><span style="color:#000000">Õ</span><span style="color:#800080">M</span><span style="color:#000000">©</span><span style="color:#800080">.</span></div><div class="m" style="left:2px;top:885.23px;line-height:12.667px;color:#000">0019F38C</div><div class="m" style="left:76.8px;top:885.23px;line-height:12.667px;color:#000000">19</div><div class="m" style="left:100.92px;top:885.23px;line-height:12.667px;color:#000000">BA</div><div class="m" style="left:125.03999999999999px;top:885.23px;line-height:12.667px;color:#000000">CE</div><div class="m" style="left:149.16px;top:885.23px;line-height:12.667px;color:#000000">E7</div><div class="m" style="left:172.8px;top:885.23px;line-height:12.667px;color:#000000">D5</div><div class="m" style="left:196.92000000000002px;top:885.23px;line-height:12.667px;color:#800080">4D</div><div class="m" style="left:221.04000000000002px;top:885.23px;line-height:12.667px;color:#000000">A9</div><div class="m" style="left:245.16000000000003px;top:885.23px;line-height:12.667px;color:#800080">0C</div><div class="m" style="left:269.3px;top:885.23px;line-height:12.667px;color:#000000">19</div><div class="m" style="left:293.42px;top:885.23px;line-height:12.667px;color:#000000">BA</div><div class="m" style="left:317.54px;top:885.23px;line-height:12.667px;color:#000000">CE</div><div class="m" style="left:341.66px;top:885.23px;line-height:12.667px;color:#000000">E7</div><div class="m" style="left:365.8px;top:885.23px;line-height:12.667px;color:#000000">D5</div><div class="m" style="left:389.92px;top:885.23px;line-height:12.667px;color:#800080">4D</div><div class="m" style="left:414.04px;top:885.23px;line-height:12.667px;color:#000000">A9</div><div class="m" style="left:438.16px;top:885.23px;line-height:12.667px;color:#800080">0C</div><div class="m" style="left:464px;top:885.23px;line-height:12.667px"><span style="color:#000000">.</span><span style="color:#000000">º</span><span style="color:#000000">Î</span><span style="color:#000000">ç</span><span style="color:#000000">Õ</span><span style="color:#800080">M</span><span style="color:#000000">©</span><span style="color:#800080">.</span><span style="color:#000000">.</span><span style="color:#000000">º</span><span style="color:#000000">Î</span><span style="color:#000000">ç</span><span style="color:#000000">Õ</span><span style="color:#800080">M</span><span style="color:#000000">©</span><span style="color:#800080">.</span></div><div class="m" style="left:2px;top:897.9px;line-height:12.667px;color:#000">0019F39C</div><div class="m" style="left:76.8px;top:897.9px;line-height:12.667px;color:#000000">19</div><div class="m" style="left:100.92px;top:897.9px;line-height:12.667px;color:#000000">BA</div><div class="m" style="left:125.03999999999999px;top:897.9px;line-height:12.667px;color:#000000">CE</div><div class="m" style="left:149.16px;top:897.9px;line-height:12.667px;color:#000000">E7</div><div class="m" style="left:172.8px;top:897.9px;line-height:12.667px;color:#000000">D5</div><div class="m" style="left:196.92000000000002px;top:897.9px;line-height:12.667px;color:#800080">4D</div><div class="m" style="left:221.04000000000002px;top:897.9px;line-height:12.667px;color:#000000">A9</div><div class="m" style="left:245.16000000000003px;top:897.9px;line-height:12.667px;color:#800080">0C</div><div class="m" style="left:269.3px;top:897.9px;line-height:12.667px;color:#000000">19</div><div class="m" style="left:293.42px;top:897.9px;line-height:12.667px;color:#000000">BA</div><div class="m" style="left:317.54px;top:897.9px;line-height:12.667px;color:#000000">CE</div><div class="m" style="left:341.66px;top:897.9px;line-height:12.667px;color:#000000">E7</div><div class="m" style="left:365.8px;top:897.9px;line-height:12.667px;color:#000000">D5</div><div class="m" style="left:389.92px;top:897.9px;line-height:12.667px;color:#800080">4D</div><div class="m" style="left:414.04px;top:897.9px;line-height:12.667px;color:#000000">A9</div><div class="m" style="left:438.16px;top:897.9px;line-height:12.667px;color:#800080">0C</div><div class="m" style="left:464px;top:897.9px;line-height:12.667px"><span style="color:#000000">.</span><span style="color:#000000">º</span><span style="color:#000000">Î</span><span style="color:#000000">ç</span><span style="color:#000000">Õ</span><span style="color:#800080">M</span><span style="color:#000000">©</span><span style="color:#800080">.</span><span style="color:#000000">.</span><span style="color:#000000">º</span><span style="color:#000000">Î</span><span style="color:#000000">ç</span><span style="color:#000000">Õ</span><span style="color:#800080">M</span><span style="color:#000000">©</span><span style="color:#800080">.</span></div><div class="m" style="left:2px;top:910.57px;line-height:12.667px;color:#000">0019F3AC</div><div class="m" style="left:76.8px;top:910.57px;line-height:12.667px;color:#000000">1C</div><div class="m" style="left:100.92px;top:910.57px;line-height:12.667px;color:#800080">27</div><div class="m" style="left:125.03999999999999px;top:910.57px;line-height:12.667px;color:#000000">95</div><div class="m" style="left:149.16px;top:910.57px;line-height:12.667px;color:#000000">F5</div><div class="m" style="left:172.8px;top:910.57px;line-height:12.667px;color:#000000">F0</div><div class="m" style="left:196.92000000000002px;top:910.57px;line-height:12.667px;color:#800080">70</div><div class="m" style="left:221.04000000000002px;top:910.57px;line-height:12.667px;color:#800080">40</div><div class="m" style="left:245.16000000000003px;top:910.57px;line-height:12.667px;color:#008000">00</div><div class="m" style="left:269.3px;top:910.57px;line-height:12.667px;color:#000000">DC</div><div class="m" style="left:293.42px;top:910.57px;line-height:12.667px;color:#000000">08</div><div class="m" style="left:317.54px;top:910.57px;line-height:12.667px;color:#800080">54</div><div class="m" style="left:341.66px;top:910.57px;line-height:12.667px;color:#008000">00</div><div class="m" style="left:365.8px;top:910.57px;line-height:12.667px;color:#000000">E4</div><div class="m" style="left:389.92px;top:910.57px;line-height:12.667px;color:#000000">F3</div><div class="m" style="left:414.04px;top:910.57px;line-height:12.667px;color:#000000">19</div><div class="m" style="left:438.16px;top:910.57px;line-height:12.667px;color:#008000">00</div><div class="m" style="left:464px;top:910.57px;line-height:12.667px"><span style="color:#000000">.</span><span style="color:#800080">'</span><span style="color:#000000">.</span><span style="color:#000000">õ</span><span style="color:#000000">ð</span><span style="color:#800080">p</span><span style="color:#800080">@</span><span style="color:#008000">.</span><span style="color:#000000">Ü</span><span style="color:#000000">.</span><span style="color:#800080">T</span><span style="color:#008000">.</span><span style="color:#000000">ä</span><span style="color:#000000">ó</span><span style="color:#000000">.</span><span style="color:#008000">.</span></div><div class="m" style="left:2px;top:923.24px;line-height:12.667px;color:#000">0019F3BC</div><div class="m" style="left:76.8px;top:923.24px;line-height:12.667px;color:#000000">92</div><div class="m" style="left:100.92px;top:923.24px;line-height:12.667px;color:#800080">7C</div><div class="m" style="left:125.03999999999999px;top:923.24px;line-height:12.667px;color:#000000">9F</div><div class="m" style="left:149.16px;top:923.24px;line-height:12.667px;color:#800080">77</div><div class="m" style="left:172.8px;top:923.24px;line-height:12.667px;color:#000000">DC</div><div class="m" style="left:196.92000000000002px;top:923.24px;line-height:12.667px;color:#000000">08</div><div class="m" style="left:221.04000000000002px;top:923.24px;line-height:12.667px;color:#800080">54</div><div class="m" style="left:245.16000000000003px;top:923.24px;line-height:12.667px;color:#008000">00</div><div class="m" style="left:269.3px;top:923.24px;line-height:12.667px;color:#000000">11</div><div class="m" style="left:293.42px;top:923.24px;line-height:12.667px;color:#000000">01</div><div class="m" style="left:317.54px;top:923.24px;line-height:12.667px;color:#008000">00</div><div class="m" style="left:341.66px;top:923.24px;line-height:12.667px;color:#008000">00</div><div class="m" style="left:365.8px;top:923.24px;line-height:12.667px;color:#000000">01</div><div class="m" style="left:389.92px;top:923.24px;line-height:12.667px;color:#008000">00</div><div class="m" style="left:414.04px;top:923.24px;line-height:12.667px;color:#008000">00</div><div class="m" style="left:438.16px;top:923.24px;line-height:12.667px;color:#008000">00</div><div class="m" style="left:464px;top:923.24px;line-height:12.667px"><span style="color:#000000">.</span><span style="color:#800080">|</span><span style="color:#000000">.</span><span style="color:#800080">w</span><span style="color:#000000">Ü</span><span style="color:#000000">.</span><span style="color:#800080">T</span><span style="color:#008000">.</span><span style="color:#000000">.</span><span style="color:#000000">.</span><span style="color:#008000">.</span><span style="color:#008000">.</span><span style="color:#000000">.</span><span style="color:#008000">.</span><span style="color:#008000">.</span><span style="color:#008000">.</span></div><div class="m" style="left:2px;top:935.9px;line-height:12.667px;color:#000">0019F3CC</div><div class="m" style="left:76.8px;top:935.9px;line-height:12.667px;color:#800080">62</div><div class="m" style="left:100.92px;top:935.9px;line-height:12.667px;color:#008000">00</div><div class="m" style="left:125.03999999999999px;top:935.9px;line-height:12.667px;color:#000000">0E</div><div class="m" style="left:149.16px;top:935.9px;line-height:12.667px;color:#008000">00</div><div class="m" style="left:172.8px;top:935.9px;line-height:12.667px;color:#000000">DC</div><div class="m" style="left:196.92000000000002px;top:935.9px;line-height:12.667px;color:#000000">08</div><div class="m" style="left:221.04000000000002px;top:935.9px;line-height:12.667px;color:#800080">54</div><div class="m" style="left:245.16000000000003px;top:935.9px;line-height:12.667px;color:#008000">00</div><div class="m" style="left:269.3px;top:935.9px;line-height:12.667px;color:#000000">CD</div><div class="m" style="left:293.42px;top:935.9px;line-height:12.667px;color:#000000">AB</div><div class="m" style="left:317.54px;top:935.9px;line-height:12.667px;color:#000000">BA</div><div class="m" style="left:341.66px;top:935.9px;line-height:12.667px;color:#000000">DC</div><div class="m" style="left:365.8px;top:935.9px;line-height:12.667px;color:#000000">01</div><div class="m" style="left:389.92px;top:935.9px;line-height:12.667px;color:#008000">00</div><div class="m" style="left:414.04px;top:935.9px;line-height:12.667px;color:#008000">00</div><div class="m" style="left:438.16px;top:935.9px;line-height:12.667px;color:#008000">00</div><div class="m" style="left:464px;top:935.9px;line-height:12.667px"><span style="color:#800080">b</span><span style="color:#008000">.</span><span style="color:#000000">.</span><span style="color:#008000">.</span><span style="color:#000000">Ü</span><span style="color:#000000">.</span><span style="color:#800080">T</span><span style="color:#008000">.</span><span style="color:#000000">Í</span><span style="color:#000000">«</span><span style="color:#000000">º</span><span style="color:#000000">Ü</span><span style="color:#000000">.</span><span style="color:#008000">.</span><span style="color:#008000">.</span><span style="color:#008000">.</span></div><div class="m" style="left:2px;top:948.57px;line-height:12.667px;color:#000">0019F3DC</div><div class="m" style="left:76.8px;top:948.57px;line-height:12.667px;color:#000000">10</div><div class="m" style="left:100.92px;top:948.57px;line-height:12.667px;color:#800080">60</div><div class="m" style="left:125.03999999999999px;top:948.57px;line-height:12.667px;color:#008000">00</div><div class="m" style="left:149.16px;top:948.57px;line-height:12.667px;color:#000000">80</div><div class="m" style="left:172.8px;top:948.57px;line-height:12.667px;color:#000000">DC</div><div class="m" style="left:196.92000000000002px;top:948.57px;line-height:12.667px;color:#000000">08</div><div class="m" style="left:221.04000000000002px;top:948.57px;line-height:12.667px;color:#800080">54</div><div class="m" style="left:245.16000000000003px;top:948.57px;line-height:12.667px;color:#008000">00</div><div class="m" style="left:269.3px;top:948.57px;line-height:12.667px;color:#800080">78</div><div class="m" style="left:293.42px;top:948.57px;line-height:12.667px;color:#000000">F4</div><div class="m" style="left:317.54px;top:948.57px;line-height:12.667px;color:#000000">19</div><div class="m" style="left:341.66px;top:948.57px;line-height:12.667px;color:#008000">00</div><div class="m" style="left:365.8px;top:948.57px;line-height:12.667px;color:#000000">11</div><div class="m" style="left:389.92px;top:948.57px;line-height:12.667px;color:#800080">3B</div><div class="m" style="left:414.04px;top:948.57px;line-height:12.667px;color:#000000">9D</div><div class="m" style="left:438.16px;top:948.57px;line-height:12.667px;color:#800080">77</div><div class="m" style="left:464px;top:948.57px;line-height:12.667px"><span style="color:#000000">.</span><span style="color:#800080">`</span><span style="color:#008000">.</span><span style="color:#000000">.</span><span style="color:#000000">Ü</span><span style="color:#000000">.</span><span style="color:#800080">T</span><span style="color:#008000">.</span><span style="color:#800080">x</span><span style="color:#000000">ô</span><span style="color:#000000">.</span><span style="color:#008000">.</span><span style="color:#000000">.</span><span style="color:#800080">;</span><span style="color:#000000">.</span><span style="color:#800080">w</span></div><div class="m" style="left:2px;top:961.24px;line-height:12.667px;color:#ff0000">0019F3EC</div><div class="m" style="left:76.8px;top:961.24px;line-height:12.667px;color:#000000">BA</div><div class="m" style="left:100.92px;top:961.24px;line-height:12.667px;color:#800080">70</div><div class="m" style="left:125.03999999999999px;top:961.24px;line-height:12.667px;color:#800080">40</div><div class="m" style="left:149.16px;top:961.24px;line-height:12.667px;color:#008000">00</div><div class="m" style="left:172.8px;top:961.24px;line-height:12.667px;color:#000000">DC</div><div class="m" style="left:196.92000000000002px;top:961.24px;line-height:12.667px;color:#000000">08</div><div class="m" style="left:221.04000000000002px;top:961.24px;line-height:12.667px;color:#800080">54</div><div class="m" style="left:245.16000000000003px;top:961.24px;line-height:12.667px;color:#008000">00</div><div class="m" style="left:269.3px;top:961.24px;line-height:12.667px;color:#000000">11</div><div class="m" style="left:293.42px;top:961.24px;line-height:12.667px;color:#000000">01</div><div class="m" style="left:317.54px;top:961.24px;line-height:12.667px;color:#008000">00</div><div class="m" style="left:341.66px;top:961.24px;line-height:12.667px;color:#008000">00</div><div class="m" style="left:365.8px;top:961.24px;line-height:12.667px;color:#000000">01</div><div class="m" style="left:389.92px;top:961.24px;line-height:12.667px;color:#008000">00</div><div class="m" style="left:414.04px;top:961.24px;line-height:12.667px;color:#008000">00</div><div class="m" style="left:438.16px;top:961.24px;line-height:12.667px;color:#008000">00</div><div class="m" style="left:464px;top:961.24px;line-height:12.667px"><span style="color:#000000">°</span><span style="color:#800080">p</span><span style="color:#800080">@</span><span style="color:#008000">.</span><span style="color:#000000">Ü</span><span style="color:#000000">.</span><span style="color:#800080">T</span><span style="color:#008000">.</span><span style="color:#000000">.</span><span style="color:#000000">.</span><span style="color:#008000">.</span><span style="color:#008000">.</span><span style="color:#000000">.</span><span style="color:#008000">.</span><span style="color:#008000">.</span><span style="color:#008000">.</span></div><div style="position:absolute;left:172.3px;top:920.17px;width:88.5px;height:2.2px;background:#00ff00"></div><div style="position:absolute;left:268.8px;top:920.17px;width:88.5px;height:2.2px;background:#000080"></div><div style="position:absolute;left:365.3px;top:920.17px;width:88.5px;height:2.2px;background:#000080"></div><div style="position:absolute;left:76.3px;top:932.84px;width:88.5px;height:2.2px;background:#ff0000"></div><div style="position:absolute;left:172.3px;top:932.84px;width:88.5px;height:2.2px;background:#000080"></div><div style="position:absolute;left:172.3px;top:945.5px;width:88.5px;height:2.2px;background:#000080"></div><div style="position:absolute;left:172.3px;top:958.17px;width:88.5px;height:2.2px;background:#000080"></div><div style="position:absolute;left:268.8px;top:958.17px;width:88.5px;height:2.2px;background:#000080"></div><div style="position:absolute;left:365.3px;top:958.17px;width:88.5px;height:2.2px;background:#ff0000"></div><div style="position:absolute;left:1010px;top:812px;width:789px;height:1.5px;background:#383838"></div><div style="position:absolute;left:1010px;top:812px;width:1px;height:157px;background:#383838"></div><div style="position:absolute;left:1011px;top:814px;width:770px;height:155px;background:#fff8f0"></div><div style="position:absolute;left:1781px;top:814px;width:18px;height:155px;background:#f0f0f0"></div><div style="position:absolute;left:1011px;top:852.001px;width:770px;height:50.668px;background:#c0c0c0"></div><div style="position:absolute;left:1011px;top:852.001px;width:72px;height:12.667px;background:#000"></div><div style="position:absolute;left:1083px;top:814px;width:1px;height:155px;background:#8c8c8c"></div><div style="position:absolute;left:1159px;top:814px;width:1px;height:155px;background:#8c8c8c"></div><div class="m" style="left:1015px;top:815.5px;line-height:12.667px;color:#808080">0019F2A0</div><div class="m" style="left:1089px;top:815.5px;line-height:12.667px;color:#808080">0040F480</div><div class="m" style="left:1165px;top:815.5px;line-height:12.667px;letter-spacing:0.057px;color:#808080">a4wsetup.0040F480</div><div class="m" style="left:1015px;top:828.17px;line-height:12.667px;color:#808080">0019F2A4</div><div class="m" style="left:1089px;top:828.17px;line-height:12.667px;color:#808080">00406FBE</div><div class="m" style="left:1165px;top:828.17px;line-height:12.667px;letter-spacing:0.057px;color:#808080">return to a4wsetup.00406FBE from a4wsetup.004073F0</div><div class="m" style="left:1015px;top:840.83px;line-height:12.667px;color:#808080">0019F2A8</div><div class="m" style="left:1089px;top:840.83px;line-height:12.667px;color:#808080">0072D5B4</div><div class="m" style="left:1015px;top:853.5px;line-height:12.667px;color:#ffffff">0019F2AC</div><div class="m" style="left:1089px;top:853.5px;line-height:12.667px;color:#000">000007FF</div><div class="m" style="left:1015px;top:866.17px;line-height:12.667px;color:#000">0019F2B0</div><div class="m" style="left:1089px;top:866.17px;line-height:12.667px;color:#000">0040F4D0</div><div class="m" style="left:1165px;top:866.17px;line-height:12.667px;letter-spacing:0.057px;color:#000">a4wsetup.0040F4D0</div><div class="m" style="left:1015px;top:878.84px;line-height:12.667px;color:#000">0019F2B4</div><div class="m" style="left:1089px;top:878.84px;line-height:12.667px;color:#000">0019F36C</div><div class="m" style="left:1015px;top:891.5px;line-height:12.667px;color:#000">0019F2B8</div><div class="m" style="left:1089px;top:891.5px;line-height:12.667px;color:#000">0019F2C8</div><div class="m" style="left:1015px;top:904.17px;line-height:12.667px;color:#808080">0019F2BC</div><div class="m" style="left:1089px;top:904.17px;line-height:12.667px;color:#000">80006010</div><div class="m" style="left:1015px;top:916.84px;line-height:12.667px;color:#808080">0019F2C0</div><div class="m" style="left:1089px;top:916.84px;line-height:12.667px;color:#000">005408DC</div><div class="m" style="left:1165px;top:916.84px;line-height:12.667px;letter-spacing:0.057px;color:#000">L"n Shilling"</div><div class="m" style="left:1015px;top:929.5px;line-height:12.667px;color:#808080">0019F2C4</div><div class="m" style="left:1089px;top:929.5px;line-height:12.667px;color:#000">0019F3B8</div><div class="m" style="left:1015px;top:942.17px;line-height:12.667px;color:#808080">0019F2C8</div><div class="m" style="left:1089px;top:942.17px;line-height:12.667px;color:#000">00000055</div><div class="m" style="left:1015px;top:954.84px;line-height:12.667px;color:#808080">0019F2CC</div><div class="m" style="left:1089px;top:954.84px;line-height:12.667px;color:#000">FFFFFFFF</div><div class="m" style="left:1015px;top:967.5px;line-height:12.667px;color:#808080">0019F2D0</div><div class="m" style="left:1089px;top:967.5px;line-height:12.667px;color:#000">FFFFFFFF</div></body></html>
